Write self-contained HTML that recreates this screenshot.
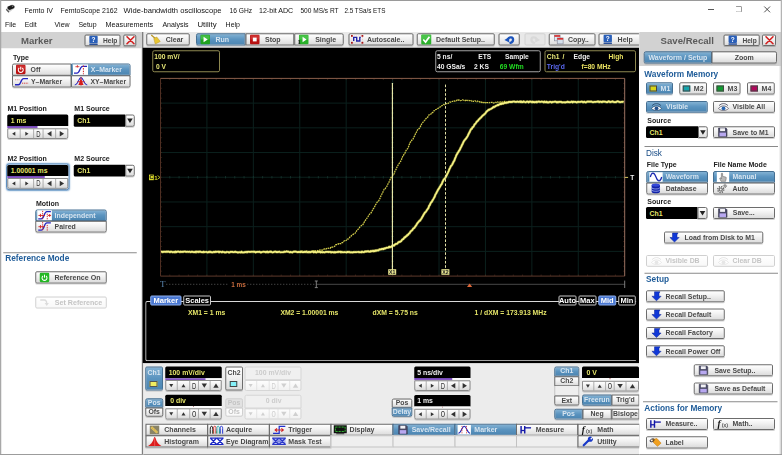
<!DOCTYPE html><html><head><meta charset="utf-8"><title>FemtoScope</title><style>
*{box-sizing:border-box;margin:0;padding:0}
html,body{width:782px;height:455px;overflow:hidden;background:#fff}
body{font-family:"Liberation Sans",sans-serif;position:relative;color:#222}
.a{position:absolute}
.t{position:absolute;white-space:nowrap;line-height:1;}
.b{font-weight:bold}
.btn{position:absolute;border:1px solid #6c6c6c;border-radius:1.6px;background:linear-gradient(#ffffff,#f1f1f1 45%,#dcdcdc);box-shadow:0 1px 0 rgba(0,0,0,.18)}
.sel{background:linear-gradient(#82b1d3,#5a93bf 50%,#4c86b2);border-color:#456f92}
.dis{border-color:#d0d0d0;background:linear-gradient(#ffffff,#f8f8f8);box-shadow:none}
.lbl{position:absolute;white-space:nowrap;line-height:1;font-weight:bold;font-size:6.9px;color:#484848}
.sel .lbl{color:#d8e5f0}
.dis .lbl{color:#c4c4c4}
.fld{position:absolute;background:#000}
.hd{position:absolute;white-space:nowrap;line-height:1;font-weight:bold;color:#1f5c99}
svg{position:absolute;overflow:visible}
</style></head><body><div style="position:absolute;left:0;top:0;width:3128px;height:1820px;transform:scale(.25);transform-origin:0 0"><div style="zoom:4;position:absolute;left:0;top:0;width:782px;height:455px;overflow:hidden">
<div class="a" style="left:0px;top:0px;width:782px;height:1px;background:#9a9a9a;"></div>
<svg style="left:5.6px;top:4.6px" width="9.4" height="8.6" viewBox="0 0 9.4 8.6"><path d="M.3 5.2 L2 2.2 L6.6 .3 L9 1.4 L8.8 4 L3.2 8.3 Z" fill="#d0d0d0"/><path d="M2 2.2 L6.6 .3 L9 1.4 L8.8 3.6 L4.2 5.4 L2.2 4.4 Z" fill="#1a1a1a"/><path d="M.3 5.2 L3.2 8.3 L3.6 6.8 L1.2 4.4Z" fill="#555"/><path d="M6.2 1.3 L7.6 1.9" stroke="#e0e0e0" stroke-width=".7"/></svg>
<svg style="left:0;top:0" width="782" height="455"><text x="24.6" y="12.66" font-size="7.4" fill="#111"  textLength="28.40" lengthAdjust="spacingAndGlyphs" font-family="Liberation Sans,sans-serif">Femto IV</text></svg>
<svg style="left:0;top:0" width="782" height="455"><text x="60.6" y="12.66" font-size="7.4" fill="#111"  textLength="57.00" lengthAdjust="spacingAndGlyphs" font-family="Liberation Sans,sans-serif">FemtoScope 2162</text></svg>
<svg style="left:0;top:0" width="782" height="455"><text x="123.6" y="12.66" font-size="7.4" fill="#111"  textLength="98.00" lengthAdjust="spacingAndGlyphs" font-family="Liberation Sans,sans-serif">Wide-bandwidth oscilloscope</text></svg>
<svg style="left:0;top:0" width="782" height="455"><text x="229.6" y="12.66" font-size="7.4" fill="#111"  textLength="22.60" lengthAdjust="spacingAndGlyphs" font-family="Liberation Sans,sans-serif">16 GHz</text></svg>
<svg style="left:0;top:0" width="782" height="455"><text x="259" y="12.66" font-size="7.4" fill="#111"  textLength="34.20" lengthAdjust="spacingAndGlyphs" font-family="Liberation Sans,sans-serif">12-bit ADC</text></svg>
<svg style="left:0;top:0" width="782" height="455"><text x="300.4" y="12.66" font-size="7.4" fill="#111"  textLength="38.20" lengthAdjust="spacingAndGlyphs" font-family="Liberation Sans,sans-serif">500 MS/s RT</text></svg>
<svg style="left:0;top:0" width="782" height="455"><text x="344.4" y="12.66" font-size="7.4" fill="#111"  textLength="41.00" lengthAdjust="spacingAndGlyphs" font-family="Liberation Sans,sans-serif">2.5 TSa/s ETS</text></svg>
<div class="a" style="left:708px;top:8.9px;width:6px;height:0.9px;background:#222;"></div>
<div class="a" style="left:735.6px;top:6.2px;width:6.2px;height:6px;border:0.8px solid #555;border-top-color:#111;border-right-color:#111;border-radius:.8px"></div>
<svg style="left:764.3px;top:6.4px" width="5.8" height="5.8" viewBox="0 0 7 7"><path d="M0 0 L7 7 M7 0 L0 7" stroke="#222" stroke-width=".95"/></svg>
<svg style="left:0;top:0" width="782" height="455"><text x="5" y="27.44" font-size="7.6" fill="#111"  textLength="11.20" lengthAdjust="spacingAndGlyphs" font-family="Liberation Sans,sans-serif">File</text></svg>
<svg style="left:0;top:0" width="782" height="455"><text x="24.8" y="27.44" font-size="7.6" fill="#111"  textLength="11.80" lengthAdjust="spacingAndGlyphs" font-family="Liberation Sans,sans-serif">Edit</text></svg>
<svg style="left:0;top:0" width="782" height="455"><text x="54.6" y="27.44" font-size="7.6" fill="#111"  textLength="15.00" lengthAdjust="spacingAndGlyphs" font-family="Liberation Sans,sans-serif">View</text></svg>
<svg style="left:0;top:0" width="782" height="455"><text x="78.4" y="27.44" font-size="7.6" fill="#111"  textLength="18.20" lengthAdjust="spacingAndGlyphs" font-family="Liberation Sans,sans-serif">Setup</text></svg>
<svg style="left:0;top:0" width="782" height="455"><text x="105.5" y="27.44" font-size="7.6" fill="#111"  textLength="47.70" lengthAdjust="spacingAndGlyphs" font-family="Liberation Sans,sans-serif">Measurements</text></svg>
<svg style="left:0;top:0" width="782" height="455"><text x="162.4" y="27.44" font-size="7.6" fill="#111"  textLength="26.20" lengthAdjust="spacingAndGlyphs" font-family="Liberation Sans,sans-serif">Analysis</text></svg>
<svg style="left:0;top:0" width="782" height="455"><text x="197.4" y="27.44" font-size="7.6" fill="#111"  textLength="19.20" lengthAdjust="spacingAndGlyphs" font-family="Liberation Sans,sans-serif">Utility</text></svg>
<svg style="left:0;top:0" width="782" height="455"><text x="225.6" y="27.44" font-size="7.6" fill="#111"  textLength="14.40" lengthAdjust="spacingAndGlyphs" font-family="Liberation Sans,sans-serif">Help</text></svg>
<div class="a" style="left:0px;top:32px;width:142px;height:423px;background:#fff;"></div>
<div class="a" style="left:0px;top:32px;width:142px;height:16.3px;background:#d2d2d2;"></div>
<div class="a" style="left:0px;top:0px;width:1.3px;height:455px;background:#a8a8a8;"></div>
<div class="a" style="left:141px;top:48px;width:1.5px;height:407px;background:#e6e6e6;"></div>
<div class="t b" style="left:21px;top:36.20px;font-size:9.6px;color:#5a5a5a;">Marker</div>
<div class="btn" style="left:84.4px;top:34.4px;width:36px;height:11.8px;"><svg style="left:3.5999999999999996px;top:0.25px" width="9" height="9.3" viewBox="0 0 9 10"><rect x="0" y="0" width="9" height="8" rx="1" fill="#2a5fb8"/><rect x="0" y="8.4" width="9" height="1.6" fill="#2a4f98"/><text x="4.5" y="6.6" font-size="7" font-weight="bold" fill="#fff" text-anchor="middle" font-family="Liberation Sans,sans-serif">?</text></svg><div class="lbl" style="left:17.6px;top:1.60px;font-size:6.6px;">Help</div></div>
<div class="btn" style="left:123.3px;top:34.4px;width:13px;height:11.8px;"><svg style="left:1.6px;top:0.4px" width="9" height="9" viewBox="0 0 9 9"><path d="M1 1 L8 8 M8 1 L1 8" stroke="#d42020" stroke-width="1.6" stroke-linecap="round"/></svg></div>
<div class="t b" style="left:13px;top:54.30px;font-size:7px;color:#222;">Type</div>
<div class="btn" style="left:12px;top:63.5px;width:59.5px;height:12.2px;border-radius:2px 0 0 0"><svg style="left:3px;top:0.35px" width="9.5" height="9.5" viewBox="0 0 10 10"><rect width="10" height="10" rx="1.2" fill="#bc1212"/><rect x=".6" y=".6" width="8.8" height="4" rx="1" fill="#e05050" opacity=".45"/><path d="M3.4 3.4 A2.6 2.6 0 1 0 6.6 3.4" fill="none" stroke="#fff" stroke-width="1.1"/><path d="M5 2 V5.2" stroke="#fff" stroke-width="1.1"/></svg><div class="lbl" style="left:17.6px;top:1.65px;font-size:6.9px;">Off</div></div>
<div class="btn sel" style="left:71px;top:63.5px;width:59.5px;height:12.2px;border-radius:0 2px 0 0"><svg style="left:1px;top:-0.1px" width="15" height="10.4" viewBox="0 0 15 10.4"><rect width="15" height="10.4" fill="#fff"/><path d="M1 8.6 H4 C7 8.6 6.6 1.8 9.6 1.8 H14" fill="none" stroke="#2424c0" stroke-width="1.3"/><path d="M10.4 1 V9.8" stroke="#d02020" stroke-width="1" stroke-dasharray="1.5 1.1"/><path d="M2.4 2.2 H6.4 M4.4 .6 V3" stroke="#d02020" stroke-width=".8"/></svg><div class="lbl" style="left:18.8px;top:1.65px;font-size:6.9px;">X–Marker</div></div>
<div class="btn" style="left:12px;top:75.3px;width:59.5px;height:12.2px;border-radius:0 0 0 2px"><svg style="left:1.6px;top:0.6px" width="14" height="9" viewBox="0 0 14 9"><path d="M.5 7.8 H4 C6.6 7.8 6.2 1.6 9 1.6 H13.5" fill="none" stroke="#2424c0" stroke-width="1.4"/><path d="M.5 2.8 H6" stroke="#e08080" stroke-width=".9" stroke-dasharray="1 .8"/><path d="M7.6 6.2 H13.6" stroke="#d02020" stroke-width=".9" stroke-dasharray="1 .8"/></svg><div class="lbl" style="left:18px;top:1.65px;font-size:6.9px;">Y–Marker</div></div>
<div class="btn" style="left:71px;top:75.3px;width:59.5px;height:12.2px;border-radius:0 0 2px 0"><svg style="left:2px;top:0.3px" width="14" height="9.6" viewBox="0 0 14 10"><path d="M.5 8.8 C4 8.8 4.4 1.2 7 1.2 C9.6 1.2 10 8.8 13.5 8.8" fill="none" stroke="#2424c0" stroke-width="1.1"/><path d="M4.2 8.8 C5.6 7 5.8 2.6 7 2.6 C8.2 2.6 8.4 7 9.8 8.8 Z" fill="#d81c1c"/><path d="M3.2 5.4 H10.8 M7 .4 V9.6" stroke="#d02020" stroke-width=".8"/></svg><div class="lbl" style="left:18.4px;top:1.65px;font-size:6.9px;">XY–Marker</div></div>
<div class="t b" style="left:7.5px;top:105.10px;font-size:7px;color:#222;">M1 Position</div>
<div class="t b" style="left:74.3px;top:105.10px;font-size:7px;color:#222;">M1 Source</div>
<div class="fld" style="left:7.2px;top:114.6px;width:61px;height:11.3px;border-radius:1.5px 1.5px 0 0"></div>
<div class="t b" style="left:10.7px;top:117.00px;font-size:6.9px;color:#e6e66a;">1 ms</div>
<div class="a" style="left:7.2px;top:125.89999999999999px;width:61px;height:2.5px;background:#fbfbfb;"></div>
<div class="a" style="left:7.2px;top:125.89999999999999px;width:30.4px;height:2.3px;background:linear-gradient(#6e44b0,#9460d0);"></div>
<div class="a" style="left:7.2px;top:128.3px;width:61px;height:10.8px;border:1px solid #8c8c8c;border-radius:0 0 2px 2px;background:linear-gradient(#ffffff,#f0f0f0 45%,#dadada);box-shadow:0 1px 0 rgba(0,0,0,.18)"></div>
<svg style="left:0;top:0" width="782" height="455"><polygon points="15.30,131.80 15.30,135.80 12.10,133.80" fill="#333"/><path d="M20.19 129.10000000000002 V138.3" stroke="#9a9a9a" stroke-width=".8"/><polygon points="25.30,131.80 25.30,135.80 28.50,133.80" fill="#333"/><path d="M33.61 129.10000000000002 V138.3" stroke="#9a9a9a" stroke-width=".8"/><text x="38.34" y="136.70" font-size="8.3" fill="#333" text-anchor="middle" textLength="4.3" lengthAdjust="spacingAndGlyphs" font-family="Liberation Sans,sans-serif">D</text><path d="M43.07 129.10000000000002 V138.3" stroke="#9a9a9a" stroke-width=".8"/><polygon points="51.51,131.10 51.51,136.50 47.19,133.80" fill="#333"/><path d="M55.63 129.10000000000002 V138.3" stroke="#9a9a9a" stroke-width=".8"/><polygon points="59.76,131.10 59.76,136.50 64.08,133.80" fill="#333"/></svg>
<div class="fld" style="left:73.7px;top:114.5px;width:51.5px;height:12.2px;border-radius:1.5px 0 0 1.5px"></div>
<div class="t b" style="left:77.2px;top:117.35px;font-size:6.9px;color:#e6e66a;">Ch1</div>
<div class="btn" style="left:125.19999999999999px;top:114.5px;width:9.5px;height:12.2px;border-radius:0 2px 2px 0"></div>
<svg style="left:0;top:0" width="782" height="455"><polygon points="127.15,118.56 132.75,118.56 129.95,123.04" fill="#222"/></svg>
<div class="t b" style="left:7.5px;top:155.30px;font-size:7px;color:#222;">M2 Position</div>
<div class="t b" style="left:74.3px;top:155.30px;font-size:7px;color:#222;">M2 Source</div>
<div class="a" style="left:6px;top:163.6px;width:63.4px;height:26.6px;border:1.2px solid #5f8fc0;border-radius:3px;background:#dce8f4;box-shadow:0 0 1.5px #7aa6d0"></div>
<div class="fld" style="left:7.2px;top:164.9px;width:61px;height:11px;border-radius:1.5px 1.5px 0 0"></div>
<div class="t b" style="left:10.7px;top:167.15px;font-size:6.9px;color:#e6e66a;">1.00001 ms</div>
<div class="a" style="left:7.2px;top:175.9px;width:61px;height:2.5px;background:#fbfbfb;"></div>
<div class="a" style="left:7.2px;top:175.9px;width:37.5px;height:2.3px;background:linear-gradient(#6e44b0,#9460d0);"></div>
<div class="a" style="left:7.2px;top:178px;width:61px;height:10.8px;border:1px solid #8c8c8c;border-radius:0 0 2px 2px;background:linear-gradient(#ffffff,#f0f0f0 45%,#dadada);box-shadow:0 1px 0 rgba(0,0,0,.18)"></div>
<svg style="left:0;top:0" width="782" height="455"><polygon points="15.30,181.50 15.30,185.50 12.10,183.50" fill="#333"/><path d="M20.19 178.8 V188.0" stroke="#9a9a9a" stroke-width=".8"/><polygon points="25.30,181.50 25.30,185.50 28.50,183.50" fill="#333"/><path d="M33.61 178.8 V188.0" stroke="#9a9a9a" stroke-width=".8"/><text x="38.34" y="186.40" font-size="8.3" fill="#333" text-anchor="middle" textLength="4.3" lengthAdjust="spacingAndGlyphs" font-family="Liberation Sans,sans-serif">D</text><path d="M43.07 178.8 V188.0" stroke="#9a9a9a" stroke-width=".8"/><polygon points="51.51,180.80 51.51,186.20 47.19,183.50" fill="#333"/><path d="M55.63 178.8 V188.0" stroke="#9a9a9a" stroke-width=".8"/><polygon points="59.76,180.80 59.76,186.20 64.08,183.50" fill="#333"/></svg>
<div class="fld" style="left:73.7px;top:164.8px;width:51.5px;height:11.8px;border-radius:1.5px 0 0 1.5px"></div>
<div class="t b" style="left:77.2px;top:167.45px;font-size:6.9px;color:#e6e66a;">Ch1</div>
<div class="btn" style="left:125.19999999999999px;top:164.8px;width:9.5px;height:11.8px;border-radius:0 2px 2px 0"></div>
<svg style="left:0;top:0" width="782" height="455"><polygon points="127.15,168.66 132.75,168.66 129.95,173.14" fill="#222"/></svg>
<div class="t b" style="left:36px;top:199.70px;font-size:7px;color:#222;">Motion</div>
<div class="btn sel" style="left:35.2px;top:209.5px;width:71.6px;height:11.6px;border-radius:2px 2px 0 0"><svg style="left:1px;top:-0.2px" width="14.6" height="10" viewBox="0 0 14.6 10"><rect width="14.6" height="10" fill="#fff"/><path d="M1 8.6 H4 C7.2 8.6 6.6 1.4 9.6 1.4 H13.6" fill="none" stroke="#2424c0" stroke-width="1.3"/><path d="M5.4 .6 V9.6 M10 3.4 V9.6" stroke="#d02020" stroke-width=".9" stroke-dasharray="1.3 .9"/><path d="M1.2 5.2 H7.6 M3.2 3.6 V6.8 M10.6 5.2 H13.8 M12.4 3.8 V6.6" stroke="#d02020" stroke-width=".9"/></svg><div class="lbl" style="left:18.4px;top:1.35px;font-size:6.9px;">Independent</div></div>
<div class="btn" style="left:35.2px;top:220.8px;width:71.6px;height:11.6px;border-radius:0 0 2px 2px"><svg style="left:1px;top:-0.2px" width="14.6" height="10" viewBox="0 0 14.6 10"><path d="M1 8.6 H4 C7.2 8.6 6.6 1.4 9.6 1.4 H13.6" fill="none" stroke="#2424c0" stroke-width="1.3"/><path d="M5.4 .6 V9.6 M10 3.4 V9.6" stroke="#d02020" stroke-width=".9" stroke-dasharray="1.3 .9"/><path d="M1.2 5.2 H7.6 M3.2 3.6 V6.8" stroke="#d02020" stroke-width=".9"/></svg><div class="lbl" style="left:18.4px;top:1.35px;font-size:6.9px;">Paired</div></div>
<div class="a" style="left:3.3px;top:252.2px;width:133.5px;height:1px;background:#8a8a8a;"></div>
<div class="hd" style="left:5.2px;top:254.04999999999998px;font-size:8.3px">Reference Mode</div>
<div class="btn" style="left:35.2px;top:271.3px;width:71.6px;height:12.2px;"><svg style="left:3.5px;top:0.35px" width="9.5" height="9.5" viewBox="0 0 10 10"><rect width="10" height="10" rx="1.2" fill="#22b822"/><path d="M3.4 3.4 A2.6 2.6 0 1 0 6.6 3.4" fill="none" stroke="#fff" stroke-width="1.1"/><path d="M5 2 V5.2" stroke="#fff" stroke-width="1.1"/></svg><div class="lbl" style="left:18.2px;top:1.55px;font-size:7.1px;">Reference On</div></div>
<div class="btn dis" style="left:35.2px;top:296.6px;width:71.6px;height:11.8px;"><svg style="left:3px;top:0.9px" width="10" height="8" viewBox="0 0 10 8"><path d="M1 1.5 H5 C7.5 1.5 7.5 4 7.5 5.5" fill="none" stroke="#dcdcdc" stroke-width="1.3"/><path d="M5.4 4.6 L7.5 7.6 L9.6 4.6 Z" fill="#dcdcdc"/></svg><div class="lbl" style="left:18.6px;top:1.35px;font-size:7.1px;">Set Reference</div></div>
<div class="a" style="left:142.5px;top:32px;width:496.5px;height:16px;background:#e9e9e9;"></div>
<div class="a" style="left:142.2px;top:32px;width:1px;height:423px;background:#5a5a5a;"></div>
<div class="btn" style="left:146.3px;top:33.3px;width:43.5px;height:12.2px;"><svg style="left:3px;top:0.1px" width="11" height="10" viewBox="0 0 11 10"><path d="M1 0.5 L5 4" stroke="#b8962a" stroke-width="1.3"/><path d="M3.5 4 L6.5 2.5 L10 7 L5 9.5 Z" fill="#e8c532" stroke="#b89620" stroke-width=".5"/></svg><div class="lbl" style="left:18.5px;top:1.60px;font-size:7px;">Clear</div></div>
<div class="btn sel" style="left:196px;top:33.3px;width:49.6px;height:12.2px;border-radius:2px 0 0 2px"><svg style="left:3.5px;top:0.35px" width="9.5" height="9.5" viewBox="0 0 10 10"><rect width="10" height="10" rx="1" fill="#1fa21f"/><rect x=".5" y=".5" width="9" height="4.5" fill="#5cd25c" opacity=".6"/><path d="M3.2 2.2 L7.6 5 L3.2 7.8 Z" fill="#fff"/></svg><div class="lbl" style="left:18.5px;top:1.60px;font-size:7px;">Run</div></div>
<div class="btn" style="left:245.6px;top:33.3px;width:48.6px;height:12.2px;border-radius:0"><svg style="left:3.4000000000000004px;top:0.35px" width="9.5" height="9.5" viewBox="0 0 10 10"><rect width="10" height="10" rx="1" fill="#b81212"/><rect x=".5" y=".5" width="9" height="4.5" fill="#e85050" opacity=".5"/><rect x="3" y="3" width="4" height="4" fill="#fff"/></svg><div class="lbl" style="left:18.5px;top:1.60px;font-size:7px;">Stop</div></div>
<div class="btn" style="left:294.2px;top:33.3px;width:49.6px;height:12.2px;border-radius:0 2px 2px 0"><svg style="left:2.6px;top:0.35px" width="11" height="9.5" viewBox="-1 0 11 10"><rect width="10" height="10" rx="1" fill="#28b028"/><rect x=".5" y=".5" width="9" height="4.5" fill="#5cd25c" opacity=".6"/><path d="M3.8 2.2 L8 5 L3.8 7.8 Z" fill="#fff"/><text x="-1.6" y="10" font-size="7" font-weight="bold" fill="#111" font-family="Liberation Serif,serif">1</text></svg><div class="lbl" style="left:20px;top:1.60px;font-size:7px;">Single</div></div>
<div class="btn" style="left:348.4px;top:33.3px;width:65px;height:12.2px;"><svg style="left:1.6px;top:0.75px" width="12.3" height="8.7" viewBox="0 0 12.3 8.7"><path d="M.8 .8 H11.5 V7.9 H.8 Z" fill="none" stroke="#f0b0b0" stroke-width=".6" stroke-dasharray="1 1"/><path d="M2.7 6 V2.4 H5.7 V6 H8.8 V2.4 H9.8" fill="none" stroke="#2222a8" stroke-width="1.4"/><rect x="0" y="0" width="1.8" height="1.8" fill="#a81818"/><rect x="10.5" y="0" width="1.8" height="1.8" fill="#a81818"/><rect x="0" y="6.9" width="1.8" height="1.8" fill="#a81818"/><rect x="10.5" y="6.9" width="1.8" height="1.8" fill="#a81818"/></svg><div class="lbl" style="left:17.6px;top:1.60px;font-size:7px;">Autoscale..</div></div>
<div class="btn" style="left:416.7px;top:33.3px;width:78px;height:12.2px;"><svg style="left:3.5px;top:0.1px" width="10" height="10" viewBox="0 0 10 10"><rect width="10" height="10" rx="1" fill="#2cb02c"/><rect x=".5" y=".5" width="9" height="4.5" fill="#66d866" opacity=".5"/><path d="M2 5 L4.3 7.6 L8.2 2.2" fill="none" stroke="#fff" stroke-width="1.7"/></svg><div class="lbl" style="left:18.3px;top:1.60px;font-size:7px;">Default Setup..</div></div>
<div class="btn" style="left:498.6px;top:33.3px;width:21.2px;height:12.2px;"><svg style="left:4.6px;top:1.1px" width="10" height="8" viewBox="0 0 10 8"><path d="M3.8 3.6 C5 1.2 9 1.4 8.8 4.4 C8.7 6 7.6 7 6.2 7.3" fill="none" stroke="#1c54bc" stroke-width="2.3" stroke-linecap="round"/><path d="M.2 4.6 L4.9 1.6 L5 6.9 Z" fill="#1c54bc"/></svg></div>
<div class="btn dis" style="left:524.6px;top:33.3px;width:21px;height:12.2px;background:#e6e6e6;border-color:#d2d2d2"><svg style="left:4.6px;top:1.1px" width="10" height="8" viewBox="0 0 10 8"><g transform="translate(10,0) scale(-1,1)"><path d="M3.8 3.6 C5 1.2 9 1.4 8.8 4.4 C8.7 6 7.6 7 6.2 7.3" fill="none" stroke="#d9d9d9" stroke-width="2.3" stroke-linecap="round"/><path d="M.2 4.6 L4.9 1.6 L5 6.9 Z" fill="#d9d9d9"/></g></svg></div>
<div class="btn" style="left:548.7px;top:33.3px;width:46.7px;height:12.2px;"><svg style="left:4px;top:0.35px" width="10" height="9.5" viewBox="0 0 10 10"><rect x=".4" y=".4" width="6" height="6" fill="#e4ecf4" stroke="#889" stroke-width=".7"/><rect x=".4" y=".4" width="6" height="1.8" fill="#d83030"/><rect x="3.4" y="3.4" width="6.2" height="6.2" fill="#d4e0ec" stroke="#889" stroke-width=".7"/><rect x="3.4" y="3.4" width="6.2" height="1.8" fill="#d83030"/></svg><div class="lbl" style="left:18.2px;top:1.60px;font-size:7px;">Copy..</div></div>
<div class="btn" style="left:598.6px;top:33.3px;width:42px;height:12.2px;"><svg style="left:3.5999999999999996px;top:0.45px" width="9" height="9.3" viewBox="0 0 9 10"><rect x="0" y="0" width="9" height="8" rx="1" fill="#2a5fb8"/><rect x="0" y="8.4" width="9" height="1.6" fill="#2a4f98"/><text x="4.5" y="6.6" font-size="7" font-weight="bold" fill="#fff" text-anchor="middle" font-family="Liberation Sans,sans-serif">?</text></svg><div class="lbl" style="left:18px;top:1.60px;font-size:7px;">Help</div></div>
<div class="a" style="left:142.8px;top:47.8px;width:496.2px;height:315.3px;background:#000;"></div>
<div class="a" style="left:152.3px;top:50.2px;width:67.6px;height:22px;border:1px solid #8e8850;border-radius:2px"></div>
<div class="t b" style="left:154.3px;top:53.25px;font-size:6.7px;color:#e8e878;">100 mV/</div>
<div class="t b" style="left:156px;top:63.05px;font-size:6.7px;color:#e8e878;">0 V</div>
<div class="a" style="left:435.3px;top:50.2px;width:105.5px;height:22px;border:1px solid #a2a2a2;border-radius:2px"></div>
<div class="t b" style="left:437px;top:53.25px;font-size:6.7px;color:#f0f0f0;">5 ns/</div>
<div class="t b" style="left:478.2px;top:53.25px;font-size:6.7px;color:#f0f0f0;">ETS</div>
<div class="t b" style="left:505px;top:53.25px;font-size:6.7px;color:#f0f0f0;">Sample</div>
<div class="t b" style="left:437px;top:63.35px;font-size:6.7px;color:#f0f0f0;">40 GSa/s</div>
<div class="t b" style="left:474px;top:63.35px;font-size:6.7px;color:#f0f0f0;">2 KS</div>
<div class="t b" style="left:499.8px;top:63.35px;font-size:6.7px;color:#22dd22;">69 Wfm</div>
<div class="a" style="left:544.5px;top:50.2px;width:91.5px;height:22px;border:1px solid #8e8850;border-radius:2px"></div>
<svg style="left:0;top:0" width="782" height="455"><path d="M206.92 78.4 V276.1" stroke="#0b201d" stroke-width="1"/><path d="M253.34 78.4 V276.1" stroke="#0b201d" stroke-width="1"/><path d="M299.76 78.4 V276.1" stroke="#0b201d" stroke-width="1"/><path d="M346.18 78.4 V276.1" stroke="#0b201d" stroke-width="1"/><path d="M392.60 78.4 V276.1" stroke="#0b201d" stroke-width="1"/><path d="M439.02 78.4 V276.1" stroke="#0b201d" stroke-width="1"/><path d="M485.44 78.4 V276.1" stroke="#0b201d" stroke-width="1"/><path d="M531.86 78.4 V276.1" stroke="#0b201d" stroke-width="1"/><path d="M578.28 78.4 V276.1" stroke="#0b201d" stroke-width="1"/><path d="M160.5 103.11 H624.7" stroke="#0b201d" stroke-width="1"/><path d="M160.5 127.83 H624.7" stroke="#0b201d" stroke-width="1"/><path d="M160.5 152.54 H624.7" stroke="#0b201d" stroke-width="1"/><path d="M160.5 177.25 H624.7" stroke="#0b201d" stroke-width="1"/><path d="M160.5 201.96 H624.7" stroke="#0b201d" stroke-width="1"/><path d="M160.5 226.68 H624.7" stroke="#0b201d" stroke-width="1"/><path d="M160.5 251.39 H624.7" stroke="#0b201d" stroke-width="1"/><path d="M169.78 176.05 v2.4 M179.07 176.05 v2.4 M188.35 176.05 v2.4 M197.64 176.05 v2.4 M206.92 176.05 v2.4 M216.20 176.05 v2.4 M225.49 176.05 v2.4 M234.77 176.05 v2.4 M244.06 176.05 v2.4 M253.34 176.05 v2.4 M262.62 176.05 v2.4 M271.91 176.05 v2.4 M281.19 176.05 v2.4 M290.48 176.05 v2.4 M299.76 176.05 v2.4 M309.04 176.05 v2.4 M318.33 176.05 v2.4 M327.61 176.05 v2.4 M336.90 176.05 v2.4 M346.18 176.05 v2.4 M355.46 176.05 v2.4 M364.75 176.05 v2.4 M374.03 176.05 v2.4 M383.32 176.05 v2.4 M392.60 176.05 v2.4 M401.88 176.05 v2.4 M411.17 176.05 v2.4 M420.45 176.05 v2.4 M429.74 176.05 v2.4 M439.02 176.05 v2.4 M448.30 176.05 v2.4 M457.59 176.05 v2.4 M466.87 176.05 v2.4 M476.16 176.05 v2.4 M485.44 176.05 v2.4 M494.72 176.05 v2.4 M504.01 176.05 v2.4 M513.29 176.05 v2.4 M522.58 176.05 v2.4 M531.86 176.05 v2.4 M541.14 176.05 v2.4 M550.43 176.05 v2.4 M559.71 176.05 v2.4 M569.00 176.05 v2.4 M578.28 176.05 v2.4 M587.56 176.05 v2.4 M596.85 176.05 v2.4 M606.13 176.05 v2.4 M615.42 176.05 v2.4 M391.40 83.34 h2.4 M391.40 88.29 h2.4 M391.40 93.23 h2.4 M391.40 98.17 h2.4 M391.40 103.11 h2.4 M391.40 108.06 h2.4 M391.40 113.00 h2.4 M391.40 117.94 h2.4 M391.40 122.88 h2.4 M391.40 127.83 h2.4 M391.40 132.77 h2.4 M391.40 137.71 h2.4 M391.40 142.65 h2.4 M391.40 147.60 h2.4 M391.40 152.54 h2.4 M391.40 157.48 h2.4 M391.40 162.42 h2.4 M391.40 167.37 h2.4 M391.40 172.31 h2.4 M391.40 177.25 h2.4 M391.40 182.19 h2.4 M391.40 187.14 h2.4 M391.40 192.08 h2.4 M391.40 197.02 h2.4 M391.40 201.96 h2.4 M391.40 206.91 h2.4 M391.40 211.85 h2.4 M391.40 216.79 h2.4 M391.40 221.73 h2.4 M391.40 226.68 h2.4 M391.40 231.62 h2.4 M391.40 236.56 h2.4 M391.40 241.50 h2.4 M391.40 246.45 h2.4 M391.40 251.39 h2.4 M391.40 256.33 h2.4 M391.40 261.27 h2.4 M391.40 266.22 h2.4 M391.40 271.16 h2.4 " stroke="#183630" stroke-width=".8"/><path d="M169.78 78.4 v1.6 M169.78 276.1 v-1.6 M179.07 78.4 v1.6 M179.07 276.1 v-1.6 M188.35 78.4 v1.6 M188.35 276.1 v-1.6 M197.64 78.4 v1.6 M197.64 276.1 v-1.6 M206.92 78.4 v1.6 M206.92 276.1 v-1.6 M216.20 78.4 v1.6 M216.20 276.1 v-1.6 M225.49 78.4 v1.6 M225.49 276.1 v-1.6 M234.77 78.4 v1.6 M234.77 276.1 v-1.6 M244.06 78.4 v1.6 M244.06 276.1 v-1.6 M253.34 78.4 v1.6 M253.34 276.1 v-1.6 M262.62 78.4 v1.6 M262.62 276.1 v-1.6 M271.91 78.4 v1.6 M271.91 276.1 v-1.6 M281.19 78.4 v1.6 M281.19 276.1 v-1.6 M290.48 78.4 v1.6 M290.48 276.1 v-1.6 M299.76 78.4 v1.6 M299.76 276.1 v-1.6 M309.04 78.4 v1.6 M309.04 276.1 v-1.6 M318.33 78.4 v1.6 M318.33 276.1 v-1.6 M327.61 78.4 v1.6 M327.61 276.1 v-1.6 M336.90 78.4 v1.6 M336.90 276.1 v-1.6 M346.18 78.4 v1.6 M346.18 276.1 v-1.6 M355.46 78.4 v1.6 M355.46 276.1 v-1.6 M364.75 78.4 v1.6 M364.75 276.1 v-1.6 M374.03 78.4 v1.6 M374.03 276.1 v-1.6 M383.32 78.4 v1.6 M383.32 276.1 v-1.6 M392.60 78.4 v1.6 M392.60 276.1 v-1.6 M401.88 78.4 v1.6 M401.88 276.1 v-1.6 M411.17 78.4 v1.6 M411.17 276.1 v-1.6 M420.45 78.4 v1.6 M420.45 276.1 v-1.6 M429.74 78.4 v1.6 M429.74 276.1 v-1.6 M439.02 78.4 v1.6 M439.02 276.1 v-1.6 M448.30 78.4 v1.6 M448.30 276.1 v-1.6 M457.59 78.4 v1.6 M457.59 276.1 v-1.6 M466.87 78.4 v1.6 M466.87 276.1 v-1.6 M476.16 78.4 v1.6 M476.16 276.1 v-1.6 M485.44 78.4 v1.6 M485.44 276.1 v-1.6 M494.72 78.4 v1.6 M494.72 276.1 v-1.6 M504.01 78.4 v1.6 M504.01 276.1 v-1.6 M513.29 78.4 v1.6 M513.29 276.1 v-1.6 M522.58 78.4 v1.6 M522.58 276.1 v-1.6 M531.86 78.4 v1.6 M531.86 276.1 v-1.6 M541.14 78.4 v1.6 M541.14 276.1 v-1.6 M550.43 78.4 v1.6 M550.43 276.1 v-1.6 M559.71 78.4 v1.6 M559.71 276.1 v-1.6 M569.00 78.4 v1.6 M569.00 276.1 v-1.6 M578.28 78.4 v1.6 M578.28 276.1 v-1.6 M587.56 78.4 v1.6 M587.56 276.1 v-1.6 M596.85 78.4 v1.6 M596.85 276.1 v-1.6 M606.13 78.4 v1.6 M606.13 276.1 v-1.6 M615.42 78.4 v1.6 M615.42 276.1 v-1.6 M160.5 83.34 h1.6 M624.7 83.34 h-1.6 M160.5 88.29 h1.6 M624.7 88.29 h-1.6 M160.5 93.23 h1.6 M624.7 93.23 h-1.6 M160.5 98.17 h1.6 M624.7 98.17 h-1.6 M160.5 103.11 h1.6 M624.7 103.11 h-1.6 M160.5 108.06 h1.6 M624.7 108.06 h-1.6 M160.5 113.00 h1.6 M624.7 113.00 h-1.6 M160.5 117.94 h1.6 M624.7 117.94 h-1.6 M160.5 122.88 h1.6 M624.7 122.88 h-1.6 M160.5 127.83 h1.6 M624.7 127.83 h-1.6 M160.5 132.77 h1.6 M624.7 132.77 h-1.6 M160.5 137.71 h1.6 M624.7 137.71 h-1.6 M160.5 142.65 h1.6 M624.7 142.65 h-1.6 M160.5 147.60 h1.6 M624.7 147.60 h-1.6 M160.5 152.54 h1.6 M624.7 152.54 h-1.6 M160.5 157.48 h1.6 M624.7 157.48 h-1.6 M160.5 162.42 h1.6 M624.7 162.42 h-1.6 M160.5 167.37 h1.6 M624.7 167.37 h-1.6 M160.5 172.31 h1.6 M624.7 172.31 h-1.6 M160.5 177.25 h1.6 M624.7 177.25 h-1.6 M160.5 182.19 h1.6 M624.7 182.19 h-1.6 M160.5 187.14 h1.6 M624.7 187.14 h-1.6 M160.5 192.08 h1.6 M624.7 192.08 h-1.6 M160.5 197.02 h1.6 M624.7 197.02 h-1.6 M160.5 201.96 h1.6 M624.7 201.96 h-1.6 M160.5 206.91 h1.6 M624.7 206.91 h-1.6 M160.5 211.85 h1.6 M624.7 211.85 h-1.6 M160.5 216.79 h1.6 M624.7 216.79 h-1.6 M160.5 221.73 h1.6 M624.7 221.73 h-1.6 M160.5 226.68 h1.6 M624.7 226.68 h-1.6 M160.5 231.62 h1.6 M624.7 231.62 h-1.6 M160.5 236.56 h1.6 M624.7 236.56 h-1.6 M160.5 241.50 h1.6 M624.7 241.50 h-1.6 M160.5 246.45 h1.6 M624.7 246.45 h-1.6 M160.5 251.39 h1.6 M624.7 251.39 h-1.6 M160.5 256.33 h1.6 M624.7 256.33 h-1.6 M160.5 261.27 h1.6 M624.7 261.27 h-1.6 M160.5 266.22 h1.6 M624.7 266.22 h-1.6 M160.5 271.16 h1.6 M624.7 271.16 h-1.6 " stroke="#4a2c20" stroke-width=".6"/><path d="M160.5 276.1 V78.4" fill="none" stroke="#4e2e22" stroke-width="1"/><path d="M160.5 78.4 H624.7" fill="none" stroke="#8a5e4a" stroke-width="1"/><path d="M160.5 276.1 H624.7" fill="none" stroke="#5e3a2c" stroke-width="1"/><path d="M624.7 276.1 V78.4" fill="none" stroke="#9a7260" stroke-width="1"/><path d="M296.9 251.9 L297.8 251.7 L298.7 252.3 L299.6 252.2 L300.5 252.3 L301.4 251.5 L302.3 251.2 L303.2 251.2 L304.1 251.6 L305.0 251.8 L305.9 251.5 L306.8 251.2 L307.7 251.4 L308.6 251.6 L309.5 251.6 L310.4 251.7 L311.3 251.7 L312.2 251.5 L313.1 250.8 L314.0 251.5 L314.9 250.8 L315.8 250.9 L316.7 250.6 L317.6 250.8 L318.5 250.1 L319.4 250.0 L320.3 249.9 L321.2 249.7 L322.1 250.3 L323.0 249.7 L323.9 249.2 L324.8 249.0 L325.7 249.3 L326.6 248.5 L327.5 248.0 L328.4 248.4 L329.3 248.0 L330.2 248.2 L331.1 246.9 L332.0 247.0 L332.9 247.0 L333.8 246.6 L334.7 246.3 L335.6 244.9 L336.5 244.7 L337.4 244.1 L338.3 243.8 L339.2 244.3 L340.1 243.6 L341.0 243.6 L341.9 242.5 L342.8 242.5 L343.7 241.4 L344.6 240.6 L345.5 240.6 L346.4 240.3 L347.3 239.0 L348.2 239.0 L349.1 238.3 L350.0 237.0 L350.9 236.3 L351.8 235.3 L352.7 234.6 L353.6 234.1 L354.5 233.7 L355.4 232.9 L356.3 231.3 L357.2 230.0 L358.1 229.2 L359.0 228.5 L359.9 226.9 L360.8 226.1 L361.7 225.3 L362.6 225.0 L363.5 223.6 L364.4 221.8 L365.3 220.4 L366.2 219.3 L367.1 218.0 L368.0 216.7 L368.9 214.9 L369.8 213.9 L370.7 213.5 L371.6 211.9 L372.5 210.3 L373.4 208.6 L374.3 207.6 L375.2 205.2 L376.1 204.0 L377.0 202.4 L377.9 201.4 L378.8 200.6 L379.7 199.1 L380.6 196.7 L381.5 194.7 L382.4 193.4 L383.3 191.1 L384.2 189.3 L385.1 188.9 L386.0 187.3 L386.9 186.3 L387.8 184.2 L388.7 182.9 L389.6 180.6 L390.5 178.6 L391.4 176.9 L392.3 176.2 L393.2 175.1 L394.1 173.8 L395.0 171.0 L395.9 169.6 L396.8 167.5 L397.7 165.9 L398.6 164.0 L399.5 163.0 L400.4 161.7 L401.3 160.3 L402.2 157.4 L403.1 155.9 L404.0 154.4 L404.9 153.1 L405.8 151.0 L406.7 149.5 L407.6 148.6 L408.5 146.8 L409.4 144.3 L410.3 142.1 L411.2 141.5 L412.1 139.7 L413.0 139.0 L413.9 137.1 L414.8 135.6 L415.7 133.1 L416.6 132.0 L417.5 129.9 L418.4 128.9 L419.3 128.4 L420.2 127.1 L421.1 125.0 L422.0 123.5 L422.9 122.3 L423.8 121.3 L424.7 120.3 L425.6 119.1 L426.5 118.1 L427.4 117.5 L428.3 116.5 L429.2 114.6 L430.1 114.4 L431.0 114.0 L431.9 112.5 L432.8 112.5 L433.7 110.9 L434.6 110.6 L435.5 109.8 L436.4 109.3 L437.3 108.6 L438.2 108.2 L439.1 107.8 L440.0 107.0 L440.9 106.7 L441.8 105.8 L442.7 105.3 L443.6 104.4 L444.5 104.7 L445.4 104.2 L446.3 103.6 L447.2 103.7 L448.1 103.4 L449.0 102.6 L449.9 102.0 L450.8 102.1 L451.7 101.5 L452.6 101.4 L453.5 101.5 L454.4 100.9 L455.3 101.0 L456.2 100.8 L457.1 100.1 L458.0 100.6 L458.9 99.9 L459.8 100.6 L460.7 100.6 L461.6 100.3 L462.5 99.7 L463.4 100.2 L464.3 100.0 L465.2 100.6 L466.1 99.7 L467.0 100.4 L467.9 100.7 L468.8 100.5 L469.7 100.7 L470.6 100.1 L471.5 101.1 L472.4 100.7 L473.3 101.4 L474.2 101.4 L475.1 100.7 L476.0 101.5 L476.9 101.7 L477.8 100.9 L478.7 101.3 L479.6 101.9 L480.5 101.4 L481.4 102.4 L482.3 101.9 L483.2 102.7 L484.1 102.1 L485.0 102.6 L485.9 103.2 L486.8 102.6 L487.7 102.6 L488.6 102.8 L489.5 102.6 L490.4 102.3 L491.3 102.4 L492.2 102.3 L493.1 103.1 L494.0 102.8 L494.9 103.0 L495.8 102.2 L496.7 102.8 L497.6 102.0 L498.5 102.4 L499.4 102.4 L500.3 102.0 L501.2 102.5 L502.1 102.0 L503.0 101.9 L503.9 102.2 L504.8 101.3 L505.7 102.3 L506.6 101.9 L507.5 101.6 L508.4 102.1 L509.3 101.5 L510.2 102.3 L511.1 101.8 L512.0 101.6" fill="none" stroke="#d2cc4a" stroke-width="1.25" stroke-dasharray="1.7 0.7"/><path d="M161.0 251.8 L161.7 251.7 L162.4 252.1 L163.1 251.6 L163.8 252.0 L164.5 251.8 L165.2 251.6 L165.9 252.0 L166.6 251.5 L167.3 251.9 L168.0 251.5 L168.7 251.6 L169.4 251.9 L170.1 252.2 L170.8 251.6 L171.5 251.7 L172.2 252.0 L172.9 252.3 L173.6 252.0 L174.3 251.8 L175.0 252.3 L175.7 251.5 L176.4 252.2 L177.1 251.7 L177.8 251.6 L178.5 251.5 L179.2 251.7 L179.9 252.1 L180.6 251.6 L181.3 251.9 L182.0 252.0 L182.7 251.7 L183.4 251.9 L184.1 251.5 L184.8 251.5 L185.5 251.6 L186.2 252.0 L186.9 251.8 L187.6 251.7 L188.3 251.9 L189.0 251.8 L189.7 251.7 L190.4 252.1 L191.1 252.0 L191.8 251.6 L192.5 251.9 L193.2 251.9 L193.9 252.2 L194.6 252.1 L195.3 251.7 L196.0 252.3 L196.7 251.5 L197.4 251.8 L198.1 252.1 L198.8 251.6 L199.5 251.9 L200.2 251.5 L200.9 252.0 L201.6 252.1 L202.3 252.0 L203.0 252.3 L203.7 251.7 L204.4 252.1 L205.1 252.0 L205.8 252.0 L206.5 251.9 L207.2 252.3 L207.9 252.4 L208.6 251.9 L209.3 252.1 L210.0 251.6 L210.7 252.2 L211.4 252.1 L212.1 252.4 L212.8 252.3 L213.5 251.8 L214.2 251.9 L214.9 252.2 L215.6 251.6 L216.3 252.0 L217.0 251.7 L217.7 251.7 L218.4 251.6 L219.1 252.3 L219.8 251.7 L220.5 251.8 L221.2 252.0 L221.9 252.4 L222.6 251.7 L223.3 252.0 L224.0 252.1 L224.7 252.4 L225.4 252.4 L226.1 252.4 L226.8 251.9 L227.5 252.0 L228.2 252.0 L228.9 252.5 L229.6 252.5 L230.3 251.8 L231.0 251.8 L231.7 251.9 L232.4 251.9 L233.1 252.1 L233.8 252.2 L234.5 251.9 L235.2 251.7 L235.9 252.1 L236.6 252.0 L237.3 252.2 L238.0 252.6 L238.7 252.3 L239.4 252.2 L240.1 252.3 L240.8 252.3 L241.5 251.7 L242.2 252.5 L242.9 252.4 L243.6 252.5 L244.3 252.4 L245.0 252.0 L245.7 252.1 L246.4 251.8 L247.1 252.3 L247.8 251.7 L248.5 251.7 L249.2 251.9 L249.9 251.8 L250.6 252.0 L251.3 251.7 L252.0 251.7 L252.7 251.8 L253.4 251.7 L254.1 252.0 L254.8 251.7 L255.5 252.4 L256.2 252.2 L256.9 251.8 L257.6 251.9 L258.3 251.9 L259.0 251.9 L259.7 251.7 L260.4 252.4 L261.1 252.5 L261.8 252.0 L262.5 252.0 L263.2 251.7 L263.9 251.7 L264.6 251.9 L265.3 251.8 L266.0 252.3 L266.7 251.7 L267.4 251.6 L268.1 252.4 L268.8 252.0 L269.5 251.7 L270.2 252.0 L270.9 251.5 L271.6 252.0 L272.3 252.4 L273.0 252.3 L273.7 252.1 L274.4 251.7 L275.1 251.8 L275.8 251.6 L276.5 252.2 L277.2 251.9 L277.9 252.2 L278.6 251.8 L279.3 251.7 L280.0 252.2 L280.7 252.3 L281.4 252.2 L282.1 252.2 L282.8 252.2 L283.5 252.1 L284.2 251.6 L284.9 251.9 L285.6 251.7 L286.3 251.4 L287.0 251.4 L287.7 251.7 L288.4 251.6 L289.1 252.0 L289.8 252.3 L290.5 251.8 L291.2 252.2 L291.9 252.3 L292.6 252.3 L293.3 251.7 L294.0 251.6 L294.7 251.6 L295.4 251.6 L296.1 251.6 L296.8 252.0 L297.5 252.2 L298.2 252.2 L298.9 251.8 L299.6 252.0 L300.3 252.1 L301.0 251.5 L301.7 252.0 L302.4 252.2 L303.1 252.1 L303.8 252.1 L304.5 251.9 L305.2 251.6 L305.9 252.1 L306.6 251.7 L307.3 252.2 L308.0 252.3 L308.7 251.8 L309.4 251.8 L310.1 252.3 L310.8 252.1 L311.5 251.6 L312.2 251.6 L312.9 251.6 L313.6 252.3 L314.3 252.2 L315.0 251.6 L315.7 252.3 L316.4 252.4 L317.1 252.1 L317.8 251.8 L318.5 252.0 L319.2 251.7 L319.9 251.6 L320.6 252.4 L321.3 252.1 L322.0 252.0 L322.7 252.4 L323.4 252.0 L324.1 252.4 L324.8 252.3 L325.5 251.8 L326.2 251.8 L326.9 251.9 L327.6 251.8 L328.3 252.1 L329.0 251.9 L329.7 252.0 L330.4 251.8 L331.1 252.5 L331.8 252.0 L332.5 252.1 L333.2 252.2 L333.9 252.5 L334.6 252.0 L335.3 252.5 L336.0 252.1 L336.7 252.2 L337.4 252.1 L338.1 251.7 L338.8 252.1 L339.5 251.8 L340.2 251.7 L340.9 252.4 L341.6 251.8 L342.3 252.1 L343.0 252.3 L343.7 252.2 L344.4 252.0 L345.1 252.2 L345.8 252.2 L346.5 252.4 L347.2 251.8 L347.9 252.2 L348.6 251.9 L349.3 251.9 L350.0 252.4 L350.7 252.2 L351.4 252.2 L352.1 252.4 L352.8 252.5 L353.5 252.0 L354.2 252.2 L354.9 252.1 L355.6 252.1 L356.3 252.2 L357.0 252.0 L357.7 252.0 L358.4 251.9 L359.1 252.3 L359.8 252.1 L360.5 252.2 L361.2 252.3 L361.9 251.6 L362.6 251.9 L363.3 252.2 L364.0 252.1 L364.7 251.5 L365.4 251.4 L366.1 251.7 L366.8 251.3 L367.5 251.4 L368.2 251.1 L368.9 251.6 L369.6 251.6 L370.3 251.6 L371.0 250.9 L371.7 251.3 L372.4 251.2 L373.1 250.7 L373.8 251.3 L374.5 251.2 L375.2 250.4 L375.9 251.0 L376.6 250.3 L377.3 250.2 L378.0 250.5 L378.7 250.2 L379.4 249.4 L380.1 249.5 L380.8 249.4 L381.5 249.1 L382.2 248.9 L382.9 248.9 L383.6 249.1 L384.3 248.3 L385.0 248.6 L385.7 248.3 L386.4 247.7 L387.1 247.7 L387.8 247.7 L388.5 247.4 L389.2 246.7 L389.9 247.3 L390.6 246.9 L391.3 246.9 L392.0 245.9 L392.7 245.8 L393.4 245.3 L394.1 245.6 L394.8 244.7 L395.5 244.1 L396.2 243.9 L396.9 243.8 L397.6 243.3 L398.3 242.3 L399.0 241.8 L399.7 242.1 L400.4 241.5 L401.1 241.2 L401.8 240.1 L402.5 239.4 L403.2 239.2 L403.9 238.2 L404.6 237.2 L405.3 237.3 L406.0 236.3 L406.7 236.0 L407.4 234.8 L408.1 234.9 L408.8 233.5 L409.5 233.4 L410.2 232.1 L410.9 231.2 L411.6 230.6 L412.3 230.1 L413.0 228.9 L413.7 228.2 L414.4 227.9 L415.1 226.7 L415.8 225.7 L416.5 224.7 L417.2 223.5 L417.9 222.6 L418.6 221.8 L419.3 220.9 L420.0 220.7 L420.7 219.5 L421.4 218.7 L422.1 217.3 L422.8 216.3 L423.5 214.8 L424.2 213.8 L424.9 212.5 L425.6 212.1 L426.3 211.1 L427.0 209.9 L427.7 209.0 L428.4 208.1 L429.1 205.9 L429.8 205.1 L430.5 203.4 L431.2 202.3 L431.9 201.7 L432.6 200.2 L433.3 199.1 L434.0 197.9 L434.7 196.7 L435.4 194.6 L436.1 193.6 L436.8 192.1 L437.5 190.8 L438.2 189.5 L438.9 188.6 L439.6 187.3 L440.3 186.2 L441.0 184.9 L441.7 184.1 L442.4 182.2 L443.1 180.8 L443.8 179.4 L444.5 178.9 L445.2 177.9 L445.9 176.8 L446.6 175.3 L447.3 173.9 L448.0 172.5 L448.7 171.0 L449.4 169.1 L450.1 167.8 L450.8 166.2 L451.5 165.6 L452.2 164.6 L452.9 163.2 L453.6 161.6 L454.3 160.7 L455.0 158.6 L455.7 157.0 L456.4 155.1 L457.1 154.0 L457.8 152.7 L458.5 151.7 L459.2 150.5 L459.9 149.6 L460.6 147.8 L461.3 146.6 L462.0 145.0 L462.7 143.8 L463.4 142.1 L464.1 140.8 L464.8 140.0 L465.5 139.1 L466.2 138.4 L466.9 137.2 L467.6 136.1 L468.3 134.6 L469.0 133.2 L469.7 132.0 L470.4 130.3 L471.1 129.1 L471.8 128.8 L472.5 127.3 L473.2 127.0 L473.9 125.9 L474.6 124.3 L475.3 123.9 L476.0 122.9 L476.7 121.8 L477.4 121.1 L478.1 120.6 L478.8 119.4 L479.5 119.0 L480.2 118.1 L480.9 117.6 L481.6 116.8 L482.3 116.0 L483.0 115.2 L483.7 114.9 L484.4 114.2 L485.1 113.7 L485.8 112.6 L486.5 111.7 L487.2 111.0 L487.9 110.5 L488.6 109.7 L489.3 109.8 L490.0 109.2 L490.7 109.0 L491.4 108.6 L492.1 108.3 L492.8 107.7 L493.5 106.8 L494.2 107.1 L494.9 106.6 L495.6 106.0 L496.3 105.7 L497.0 105.5 L497.7 104.8 L498.4 105.2 L499.1 104.5 L499.8 104.1 L500.5 103.9 L501.2 104.1 L501.9 103.4 L502.6 103.6 L503.3 103.6 L504.0 103.1 L504.7 102.9 L505.4 102.8 L506.1 102.9 L506.8 102.8 L507.5 102.5 L508.2 102.4 L508.9 101.8 L509.6 101.8 L510.3 101.8 L511.0 102.2 L511.7 101.8 L512.4 102.0 L513.1 101.5 L513.8 101.5 L514.5 101.6 L515.2 101.9 L515.9 101.9 L516.6 101.9 L517.3 101.6 L518.0 101.8 L518.7 101.8 L519.4 101.8 L520.1 101.4 L520.8 102.1 L521.5 101.5 L522.2 102.2 L522.9 102.2 L523.6 101.4 L524.3 101.8 L525.0 102.1 L525.7 102.3 L526.4 101.8 L527.1 101.6 L527.8 101.6 L528.5 102.3 L529.2 101.6 L529.9 101.9 L530.6 101.5 L531.3 101.9 L532.0 102.3 L532.7 101.6 L533.4 102.2 L534.1 101.9 L534.8 102.3 L535.5 102.1 L536.2 101.7 L536.9 102.3 L537.6 101.9 L538.3 101.5 L539.0 101.5 L539.7 101.9 L540.4 101.9 L541.1 101.8 L541.8 101.6 L542.5 101.8 L543.2 101.8 L543.9 102.3 L544.6 101.5 L545.3 102.2 L546.0 102.3 L546.7 101.7 L547.4 102.4 L548.1 102.2 L548.8 102.4 L549.5 101.8 L550.2 101.9 L550.9 101.9 L551.6 102.5 L552.3 102.1 L553.0 101.9 L553.7 102.0 L554.4 101.8 L555.1 101.6 L555.8 101.7 L556.5 102.3 L557.2 101.9 L557.9 102.4 L558.6 101.8 L559.3 101.8 L560.0 102.1 L560.7 101.8 L561.4 101.9 L562.1 102.5 L562.8 102.4 L563.5 102.3 L564.2 102.2 L564.9 102.4 L565.6 102.4 L566.3 102.1 L567.0 102.2 L567.7 101.6 L568.4 102.2 L569.1 102.0 L569.8 102.3 L570.5 102.2 L571.2 101.8 L571.9 101.6 L572.6 102.4 L573.3 101.7 L574.0 102.0 L574.7 101.9 L575.4 101.8 L576.1 102.2 L576.8 102.4 L577.5 101.8 L578.2 102.1 L578.9 101.8 L579.6 102.0 L580.3 101.9 L581.0 101.7 L581.7 101.6 L582.4 101.7 L583.1 102.3 L583.8 101.9 L584.5 101.7 L585.2 102.3 L585.9 102.4 L586.6 101.9 L587.3 101.6 L588.0 101.6 L588.7 101.5 L589.4 101.7 L590.1 101.5 L590.8 101.6 L591.5 101.6 L592.2 101.9 L592.9 102.2 L593.6 102.1 L594.3 101.8 L595.0 101.8 L595.7 101.9 L596.4 101.7 L597.1 101.7 L597.8 101.4 L598.5 101.6 L599.2 102.2 L599.9 101.5 L600.6 101.8 L601.3 101.9 L602.0 102.1 L602.7 101.5 L603.4 101.6 L604.1 101.5 L604.8 101.7 L605.5 101.7 L606.2 102.2 L606.9 102.1 L607.6 102.1 L608.3 101.3 L609.0 101.3 L609.7 101.9 L610.4 102.1 L611.1 101.7 L611.8 101.8 L612.5 101.3 L613.2 101.7 L613.9 102.1 L614.6 102.0 L615.3 102.1 L616.0 102.2 L616.7 101.5 L617.4 101.4 L618.1 101.4 L618.8 101.8 L619.5 101.9 L620.2 102.2 L620.9 102.0 L621.6 101.9 L622.3 102.0 L623.0 101.7 L623.7 101.8" fill="none" stroke="#e0dc58" stroke-width="2.7" stroke-linejoin="round" opacity=".5"/><path d="M161.0 251.8 L161.7 251.7 L162.4 252.1 L163.1 251.6 L163.8 252.0 L164.5 251.8 L165.2 251.6 L165.9 252.0 L166.6 251.5 L167.3 251.9 L168.0 251.5 L168.7 251.6 L169.4 251.9 L170.1 252.2 L170.8 251.6 L171.5 251.7 L172.2 252.0 L172.9 252.3 L173.6 252.0 L174.3 251.8 L175.0 252.3 L175.7 251.5 L176.4 252.2 L177.1 251.7 L177.8 251.6 L178.5 251.5 L179.2 251.7 L179.9 252.1 L180.6 251.6 L181.3 251.9 L182.0 252.0 L182.7 251.7 L183.4 251.9 L184.1 251.5 L184.8 251.5 L185.5 251.6 L186.2 252.0 L186.9 251.8 L187.6 251.7 L188.3 251.9 L189.0 251.8 L189.7 251.7 L190.4 252.1 L191.1 252.0 L191.8 251.6 L192.5 251.9 L193.2 251.9 L193.9 252.2 L194.6 252.1 L195.3 251.7 L196.0 252.3 L196.7 251.5 L197.4 251.8 L198.1 252.1 L198.8 251.6 L199.5 251.9 L200.2 251.5 L200.9 252.0 L201.6 252.1 L202.3 252.0 L203.0 252.3 L203.7 251.7 L204.4 252.1 L205.1 252.0 L205.8 252.0 L206.5 251.9 L207.2 252.3 L207.9 252.4 L208.6 251.9 L209.3 252.1 L210.0 251.6 L210.7 252.2 L211.4 252.1 L212.1 252.4 L212.8 252.3 L213.5 251.8 L214.2 251.9 L214.9 252.2 L215.6 251.6 L216.3 252.0 L217.0 251.7 L217.7 251.7 L218.4 251.6 L219.1 252.3 L219.8 251.7 L220.5 251.8 L221.2 252.0 L221.9 252.4 L222.6 251.7 L223.3 252.0 L224.0 252.1 L224.7 252.4 L225.4 252.4 L226.1 252.4 L226.8 251.9 L227.5 252.0 L228.2 252.0 L228.9 252.5 L229.6 252.5 L230.3 251.8 L231.0 251.8 L231.7 251.9 L232.4 251.9 L233.1 252.1 L233.8 252.2 L234.5 251.9 L235.2 251.7 L235.9 252.1 L236.6 252.0 L237.3 252.2 L238.0 252.6 L238.7 252.3 L239.4 252.2 L240.1 252.3 L240.8 252.3 L241.5 251.7 L242.2 252.5 L242.9 252.4 L243.6 252.5 L244.3 252.4 L245.0 252.0 L245.7 252.1 L246.4 251.8 L247.1 252.3 L247.8 251.7 L248.5 251.7 L249.2 251.9 L249.9 251.8 L250.6 252.0 L251.3 251.7 L252.0 251.7 L252.7 251.8 L253.4 251.7 L254.1 252.0 L254.8 251.7 L255.5 252.4 L256.2 252.2 L256.9 251.8 L257.6 251.9 L258.3 251.9 L259.0 251.9 L259.7 251.7 L260.4 252.4 L261.1 252.5 L261.8 252.0 L262.5 252.0 L263.2 251.7 L263.9 251.7 L264.6 251.9 L265.3 251.8 L266.0 252.3 L266.7 251.7 L267.4 251.6 L268.1 252.4 L268.8 252.0 L269.5 251.7 L270.2 252.0 L270.9 251.5 L271.6 252.0 L272.3 252.4 L273.0 252.3 L273.7 252.1 L274.4 251.7 L275.1 251.8 L275.8 251.6 L276.5 252.2 L277.2 251.9 L277.9 252.2 L278.6 251.8 L279.3 251.7 L280.0 252.2 L280.7 252.3 L281.4 252.2 L282.1 252.2 L282.8 252.2 L283.5 252.1 L284.2 251.6 L284.9 251.9 L285.6 251.7 L286.3 251.4 L287.0 251.4 L287.7 251.7 L288.4 251.6 L289.1 252.0 L289.8 252.3 L290.5 251.8 L291.2 252.2 L291.9 252.3 L292.6 252.3 L293.3 251.7 L294.0 251.6 L294.7 251.6 L295.4 251.6 L296.1 251.6 L296.8 252.0 L297.5 252.2 L298.2 252.2 L298.9 251.8 L299.6 252.0 L300.3 252.1 L301.0 251.5 L301.7 252.0 L302.4 252.2 L303.1 252.1 L303.8 252.1 L304.5 251.9 L305.2 251.6 L305.9 252.1 L306.6 251.7 L307.3 252.2 L308.0 252.3 L308.7 251.8 L309.4 251.8 L310.1 252.3 L310.8 252.1 L311.5 251.6 L312.2 251.6 L312.9 251.6 L313.6 252.3 L314.3 252.2 L315.0 251.6 L315.7 252.3 L316.4 252.4 L317.1 252.1 L317.8 251.8 L318.5 252.0 L319.2 251.7 L319.9 251.6 L320.6 252.4 L321.3 252.1 L322.0 252.0 L322.7 252.4 L323.4 252.0 L324.1 252.4 L324.8 252.3 L325.5 251.8 L326.2 251.8 L326.9 251.9 L327.6 251.8 L328.3 252.1 L329.0 251.9 L329.7 252.0 L330.4 251.8 L331.1 252.5 L331.8 252.0 L332.5 252.1 L333.2 252.2 L333.9 252.5 L334.6 252.0 L335.3 252.5 L336.0 252.1 L336.7 252.2 L337.4 252.1 L338.1 251.7 L338.8 252.1 L339.5 251.8 L340.2 251.7 L340.9 252.4 L341.6 251.8 L342.3 252.1 L343.0 252.3 L343.7 252.2 L344.4 252.0 L345.1 252.2 L345.8 252.2 L346.5 252.4 L347.2 251.8 L347.9 252.2 L348.6 251.9 L349.3 251.9 L350.0 252.4 L350.7 252.2 L351.4 252.2 L352.1 252.4 L352.8 252.5 L353.5 252.0 L354.2 252.2 L354.9 252.1 L355.6 252.1 L356.3 252.2 L357.0 252.0 L357.7 252.0 L358.4 251.9 L359.1 252.3 L359.8 252.1 L360.5 252.2 L361.2 252.3 L361.9 251.6 L362.6 251.9 L363.3 252.2 L364.0 252.1 L364.7 251.5 L365.4 251.4 L366.1 251.7 L366.8 251.3 L367.5 251.4 L368.2 251.1 L368.9 251.6 L369.6 251.6 L370.3 251.6 L371.0 250.9 L371.7 251.3 L372.4 251.2 L373.1 250.7 L373.8 251.3 L374.5 251.2 L375.2 250.4 L375.9 251.0 L376.6 250.3 L377.3 250.2 L378.0 250.5 L378.7 250.2 L379.4 249.4 L380.1 249.5 L380.8 249.4 L381.5 249.1 L382.2 248.9 L382.9 248.9 L383.6 249.1 L384.3 248.3 L385.0 248.6 L385.7 248.3 L386.4 247.7 L387.1 247.7 L387.8 247.7 L388.5 247.4 L389.2 246.7 L389.9 247.3 L390.6 246.9 L391.3 246.9 L392.0 245.9 L392.7 245.8 L393.4 245.3 L394.1 245.6 L394.8 244.7 L395.5 244.1 L396.2 243.9 L396.9 243.8 L397.6 243.3 L398.3 242.3 L399.0 241.8 L399.7 242.1 L400.4 241.5 L401.1 241.2 L401.8 240.1 L402.5 239.4 L403.2 239.2 L403.9 238.2 L404.6 237.2 L405.3 237.3 L406.0 236.3 L406.7 236.0 L407.4 234.8 L408.1 234.9 L408.8 233.5 L409.5 233.4 L410.2 232.1 L410.9 231.2 L411.6 230.6 L412.3 230.1 L413.0 228.9 L413.7 228.2 L414.4 227.9 L415.1 226.7 L415.8 225.7 L416.5 224.7 L417.2 223.5 L417.9 222.6 L418.6 221.8 L419.3 220.9 L420.0 220.7 L420.7 219.5 L421.4 218.7 L422.1 217.3 L422.8 216.3 L423.5 214.8 L424.2 213.8 L424.9 212.5 L425.6 212.1 L426.3 211.1 L427.0 209.9 L427.7 209.0 L428.4 208.1 L429.1 205.9 L429.8 205.1 L430.5 203.4 L431.2 202.3 L431.9 201.7 L432.6 200.2 L433.3 199.1 L434.0 197.9 L434.7 196.7 L435.4 194.6 L436.1 193.6 L436.8 192.1 L437.5 190.8 L438.2 189.5 L438.9 188.6 L439.6 187.3 L440.3 186.2 L441.0 184.9 L441.7 184.1 L442.4 182.2 L443.1 180.8 L443.8 179.4 L444.5 178.9 L445.2 177.9 L445.9 176.8 L446.6 175.3 L447.3 173.9 L448.0 172.5 L448.7 171.0 L449.4 169.1 L450.1 167.8 L450.8 166.2 L451.5 165.6 L452.2 164.6 L452.9 163.2 L453.6 161.6 L454.3 160.7 L455.0 158.6 L455.7 157.0 L456.4 155.1 L457.1 154.0 L457.8 152.7 L458.5 151.7 L459.2 150.5 L459.9 149.6 L460.6 147.8 L461.3 146.6 L462.0 145.0 L462.7 143.8 L463.4 142.1 L464.1 140.8 L464.8 140.0 L465.5 139.1 L466.2 138.4 L466.9 137.2 L467.6 136.1 L468.3 134.6 L469.0 133.2 L469.7 132.0 L470.4 130.3 L471.1 129.1 L471.8 128.8 L472.5 127.3 L473.2 127.0 L473.9 125.9 L474.6 124.3 L475.3 123.9 L476.0 122.9 L476.7 121.8 L477.4 121.1 L478.1 120.6 L478.8 119.4 L479.5 119.0 L480.2 118.1 L480.9 117.6 L481.6 116.8 L482.3 116.0 L483.0 115.2 L483.7 114.9 L484.4 114.2 L485.1 113.7 L485.8 112.6 L486.5 111.7 L487.2 111.0 L487.9 110.5 L488.6 109.7 L489.3 109.8 L490.0 109.2 L490.7 109.0 L491.4 108.6 L492.1 108.3 L492.8 107.7 L493.5 106.8 L494.2 107.1 L494.9 106.6 L495.6 106.0 L496.3 105.7 L497.0 105.5 L497.7 104.8 L498.4 105.2 L499.1 104.5 L499.8 104.1 L500.5 103.9 L501.2 104.1 L501.9 103.4 L502.6 103.6 L503.3 103.6 L504.0 103.1 L504.7 102.9 L505.4 102.8 L506.1 102.9 L506.8 102.8 L507.5 102.5 L508.2 102.4 L508.9 101.8 L509.6 101.8 L510.3 101.8 L511.0 102.2 L511.7 101.8 L512.4 102.0 L513.1 101.5 L513.8 101.5 L514.5 101.6 L515.2 101.9 L515.9 101.9 L516.6 101.9 L517.3 101.6 L518.0 101.8 L518.7 101.8 L519.4 101.8 L520.1 101.4 L520.8 102.1 L521.5 101.5 L522.2 102.2 L522.9 102.2 L523.6 101.4 L524.3 101.8 L525.0 102.1 L525.7 102.3 L526.4 101.8 L527.1 101.6 L527.8 101.6 L528.5 102.3 L529.2 101.6 L529.9 101.9 L530.6 101.5 L531.3 101.9 L532.0 102.3 L532.7 101.6 L533.4 102.2 L534.1 101.9 L534.8 102.3 L535.5 102.1 L536.2 101.7 L536.9 102.3 L537.6 101.9 L538.3 101.5 L539.0 101.5 L539.7 101.9 L540.4 101.9 L541.1 101.8 L541.8 101.6 L542.5 101.8 L543.2 101.8 L543.9 102.3 L544.6 101.5 L545.3 102.2 L546.0 102.3 L546.7 101.7 L547.4 102.4 L548.1 102.2 L548.8 102.4 L549.5 101.8 L550.2 101.9 L550.9 101.9 L551.6 102.5 L552.3 102.1 L553.0 101.9 L553.7 102.0 L554.4 101.8 L555.1 101.6 L555.8 101.7 L556.5 102.3 L557.2 101.9 L557.9 102.4 L558.6 101.8 L559.3 101.8 L560.0 102.1 L560.7 101.8 L561.4 101.9 L562.1 102.5 L562.8 102.4 L563.5 102.3 L564.2 102.2 L564.9 102.4 L565.6 102.4 L566.3 102.1 L567.0 102.2 L567.7 101.6 L568.4 102.2 L569.1 102.0 L569.8 102.3 L570.5 102.2 L571.2 101.8 L571.9 101.6 L572.6 102.4 L573.3 101.7 L574.0 102.0 L574.7 101.9 L575.4 101.8 L576.1 102.2 L576.8 102.4 L577.5 101.8 L578.2 102.1 L578.9 101.8 L579.6 102.0 L580.3 101.9 L581.0 101.7 L581.7 101.6 L582.4 101.7 L583.1 102.3 L583.8 101.9 L584.5 101.7 L585.2 102.3 L585.9 102.4 L586.6 101.9 L587.3 101.6 L588.0 101.6 L588.7 101.5 L589.4 101.7 L590.1 101.5 L590.8 101.6 L591.5 101.6 L592.2 101.9 L592.9 102.2 L593.6 102.1 L594.3 101.8 L595.0 101.8 L595.7 101.9 L596.4 101.7 L597.1 101.7 L597.8 101.4 L598.5 101.6 L599.2 102.2 L599.9 101.5 L600.6 101.8 L601.3 101.9 L602.0 102.1 L602.7 101.5 L603.4 101.6 L604.1 101.5 L604.8 101.7 L605.5 101.7 L606.2 102.2 L606.9 102.1 L607.6 102.1 L608.3 101.3 L609.0 101.3 L609.7 101.9 L610.4 102.1 L611.1 101.7 L611.8 101.8 L612.5 101.3 L613.2 101.7 L613.9 102.1 L614.6 102.0 L615.3 102.1 L616.0 102.2 L616.7 101.5 L617.4 101.4 L618.1 101.4 L618.8 101.8 L619.5 101.9 L620.2 102.2 L620.9 102.0 L621.6 101.9 L622.3 102.0 L623.0 101.7 L623.7 101.8" fill="none" stroke="#f6f284" stroke-width="1.65" stroke-linejoin="round"/><path d="M392.4 83 V270" stroke="#f4f2b0" stroke-width="1.1"/><path d="M445.5 84.6 V270" stroke="#e4e2a8" stroke-width="1" stroke-dasharray="2.6 1.7"/><rect x="388.2" y="269.2" width="8" height="5.6" fill="#e8e490"/><text x="392.2" y="274" font-size="5.2" font-weight="bold" fill="#222" text-anchor="middle" font-family="Liberation Sans,sans-serif">X1</text><rect x="441.4" y="269.2" width="8" height="5.6" fill="#e8e490"/><text x="445.4" y="274" font-size="5.2" font-weight="bold" fill="#222" text-anchor="middle" font-family="Liberation Sans,sans-serif">X2</text><rect x="149" y="174.6" width="4.8" height="5.6" fill="#d8d828"/><text x="149.5" y="179.3" font-size="5.4" font-weight="bold" fill="#111" font-family="Liberation Sans,sans-serif">C</text><text x="154.3" y="179.6" font-size="6" font-weight="bold" fill="#d8d828" font-family="Liberation Sans,sans-serif">1</text><path d="M157.6 175.6 L160 177.4 L157.6 179.2" fill="none" stroke="#d8d828" stroke-width=".8"/><path d="M624.7 177.4 h3.4" stroke="#d8c860" stroke-width="1"/><text x="630.3" y="180" font-size="6.6" font-weight="bold" fill="#f2f2f2" font-family="Liberation Sans,sans-serif">T</text><text x="160" y="287.4" font-size="9" fill="#5a86b0" font-family="Liberation Serif,serif">T</text><path d="M166 284.3 H315" stroke="#4a4a4a" stroke-width=".9" stroke-dasharray="1.4 1.6"/><rect x="229" y="280" width="18" height="8" fill="#000"/><text x="231.2" y="286.6" font-size="6.4" font-weight="bold" fill="#c86c3e" font-family="Liberation Sans,sans-serif">1 ms</text><path d="M316.3 284.3 H624.7" stroke="#484848" stroke-width="1"/><path d="M316.3 281 V287.6 M314.8 281 H317.8 M314.8 287.6 H317.8 M624.7 280.6 V288" stroke="#8a8a8a" stroke-width=".9"/><path d="M469.6 283.6 L467 287 H472.2 Z" fill="#e06838"/></svg>
<div class="t b" style="left:546.8px;top:53.25px;font-size:6.7px;color:#e8e878;">Ch1</div>
<div class="t b" style="left:562.5px;top:53.25px;font-size:6.7px;color:#e8e878;">/</div>
<div class="t b" style="left:573.6px;top:53.25px;font-size:6.7px;color:#f0f0f0;">Edge</div>
<div class="t b" style="left:608.5px;top:53.25px;font-size:6.7px;color:#e8e060;">High</div>
<div class="t b" style="left:546.8px;top:63.35px;font-size:6.7px;color:#5a68f0;">Trig'd</div>
<div class="t b" style="left:581.5px;top:63.35px;font-size:6.7px;color:#e8e060;">f=80 MHz</div>
<div class="a" style="left:145.3px;top:300.9px;width:491.5px;height:60.4px;border:1px solid #d8d8d8;border-right-color:#000;border-radius:2px 0 0 2px"></div>
<div class="a" style="left:150.2px;top:295.6px;width:31.2px;height:9.8px;background:#4a78d2;border:1px solid #8fb0ee;border-radius:1.4px"><div class="t b" style="left:-2px;right:-2px;text-align:center;top:0.35px;font-size:7.5px;color:#fff">Marker</div></div>
<div class="a" style="left:183.2px;top:295.6px;width:27.8px;height:9.8px;background:#000;border:1px solid #c8c8c8;border-radius:1.4px"><div class="t b" style="left:-2px;right:-2px;text-align:center;top:0.35px;font-size:7.5px;color:#fff">Scales</div></div>
<div class="a" style="left:558.6px;top:295.6px;width:17.8px;height:9.8px;background:#000;border:1px solid #c8c8c8;border-radius:1.4px"><div class="t b" style="left:-2px;right:-2px;text-align:center;top:0.35px;font-size:7.5px;color:#fff">Auto</div></div>
<div class="a" style="left:578.4px;top:295.6px;width:18px;height:9.8px;background:#000;border:1px solid #c8c8c8;border-radius:1.4px"><div class="t b" style="left:-2px;right:-2px;text-align:center;top:0.35px;font-size:7.5px;color:#fff">Max</div></div>
<div class="a" style="left:598.2px;top:295.6px;width:18px;height:9.8px;background:#4a78d2;border:1px solid #8fb0ee;border-radius:1.4px"><div class="t b" style="left:-2px;right:-2px;text-align:center;top:0.35px;font-size:7.5px;color:#fff">Mid</div></div>
<div class="a" style="left:618.2px;top:295.6px;width:17.6px;height:9.8px;background:#000;border:1px solid #c8c8c8;border-radius:1.4px"><div class="t b" style="left:-2px;right:-2px;text-align:center;top:0.35px;font-size:7.5px;color:#fff">Min</div></div>
<div class="t b" style="left:188px;top:309.20px;font-size:6.8px;color:#e4e468;">XM1 = 1 ms</div>
<div class="t b" style="left:280.4px;top:309.20px;font-size:6.8px;color:#e4e468;">XM2 = 1.00001 ms</div>
<div class="t b" style="left:372.6px;top:309.20px;font-size:6.8px;color:#e4e468;">dXM = 5.75 ns</div>
<div class="t b" style="left:474.6px;top:309.20px;font-size:6.8px;color:#e4e468;">1 / dXM = 173.913 MHz</div>
<div class="a" style="left:143.2px;top:363.1px;width:495.8px;height:91.9px;background:#ececec;"></div>
<div class="a" style="left:143.2px;top:363.1px;width:495.8px;height:0.8px;background:#d4d4d4;"></div>
<div class="btn sel" style="left:145.2px;top:366.5px;width:17.8px;height:24px"><div class="lbl" style="left:0;right:0;text-align:center;top:2.1px;font-size:6.9px">Ch1</div><div class="a" style="left:3.4px;top:13.4px;width:7.8px;height:6.2px;background:#f0ec60;border:1px solid #555"></div></div>
<div class="fld" style="left:165.2px;top:366.5px;width:56.6px;height:11.7px;border-radius:1.5px 1.5px 0 0"></div>
<div class="t b" style="left:168.7px;top:369.10px;font-size:6.9px;color:#e6e66a;">100 mV/div</div>
<div class="a" style="left:165.2px;top:378.2px;width:56.6px;height:2.5px;background:#fbfbfb;"></div>
<div class="a" style="left:165.2px;top:378.2px;width:40.4px;height:2.3px;background:linear-gradient(#6e44b0,#9460d0);"></div>
<div class="a" style="left:165.2px;top:380.1px;width:56.6px;height:10.8px;border:1px solid #8c8c8c;border-radius:0 0 2px 2px;background:linear-gradient(#ffffff,#f0f0f0 45%,#dadada);box-shadow:0 1px 0 rgba(0,0,0,.18)"></div>
<svg style="left:0;top:0" width="782" height="455"><polygon points="169.23,384.00 173.23,384.00 171.23,387.20" fill="#333"/><path d="M177.26 380.90000000000003 V390.1" stroke="#9a9a9a" stroke-width=".8"/><polygon points="181.48,387.20 185.48,387.20 183.48,384.00" fill="#333"/><path d="M189.71 380.90000000000003 V390.1" stroke="#9a9a9a" stroke-width=".8"/><text x="194.09" y="388.50" font-size="8.3" fill="#333" text-anchor="middle" textLength="4.3" lengthAdjust="spacingAndGlyphs" font-family="Liberation Sans,sans-serif">D</text><path d="M198.48 380.90000000000003 V390.1" stroke="#9a9a9a" stroke-width=".8"/><polygon points="201.61,383.44 207.01,383.44 204.31,387.76" fill="#333"/><path d="M210.14 380.90000000000003 V390.1" stroke="#9a9a9a" stroke-width=".8"/><polygon points="213.27,387.76 218.67,387.76 215.97,383.44" fill="#333"/></svg>
<div class="btn" style="left:225.3px;top:366.5px;width:17.6px;height:24px"><div class="lbl" style="left:0;right:0;text-align:center;top:2.1px;font-size:6.9px">Ch2</div><div class="a" style="left:3.4px;top:13.4px;width:7.6px;height:6.2px;background:#84f0f8;border:1px solid #444"></div></div>
<div class="a" style="left:244.6px;top:366.5px;width:56.8px;height:13.8px;border:1px solid #d6d6d6;border-radius:2px 2px 0 0;background:#f0f0f0"></div>
<div class="t b" style="left:255px;top:369.15px;font-size:6.9px;color:#cccccc;">100 mV/div</div>
<div class="a" style="left:244.6px;top:380.1px;width:56.8px;height:10.8px;border:1px solid #d6d6d6;border-radius:0 0 2px 2px;background:linear-gradient(#fdfdfd,#f2f2f2);"></div>
<svg style="left:0;top:0" width="782" height="455"><polygon points="248.65,384.00 252.65,384.00 250.65,387.20" fill="#d0d0d0"/><path d="M256.70 380.90000000000003 V390.1" stroke="#dedede" stroke-width=".8"/><polygon points="260.95,387.20 264.95,387.20 262.95,384.00" fill="#d0d0d0"/><path d="M269.19 380.90000000000003 V390.1" stroke="#dedede" stroke-width=".8"/><text x="273.60" y="388.50" font-size="8.3" fill="#d0d0d0" text-anchor="middle" textLength="4.3" lengthAdjust="spacingAndGlyphs" font-family="Liberation Sans,sans-serif">D</text><path d="M278.00 380.90000000000003 V390.1" stroke="#dedede" stroke-width=".8"/><polygon points="281.15,383.44 286.55,383.44 283.85,387.76" fill="#d0d0d0"/><path d="M289.70 380.90000000000003 V390.1" stroke="#dedede" stroke-width=".8"/><polygon points="292.85,387.76 298.25,387.76 295.55,383.44" fill="#d0d0d0"/></svg>
<div class="btn sel" style="left:145.2px;top:398.2px;width:18px;height:9.6px;border-radius:2px 2px 0 0"><div class="lbl" style="left:0;right:0;text-align:center;top:-0.00px;font-size:6.9px;">Pos</div></div>
<div class="btn" style="left:145.2px;top:407.6px;width:18px;height:9.2px;border-radius:0 0 2px 2px"><div class="lbl" style="left:0;right:0;text-align:center;top:-0.20px;font-size:6.9px;">Ofs</div></div>
<div class="fld" style="left:165.2px;top:394.8px;width:56.6px;height:11.2px;border-radius:1.5px 1.5px 0 0"></div>
<div class="t b" style="left:170.2px;top:397.15px;font-size:6.9px;color:#e6e66a;">0 div</div>
<div class="a" style="left:165.2px;top:406px;width:56.6px;height:2.4px;background:#fbfbfb;"></div>
<div class="a" style="left:193px;top:406px;width:1px;height:1px;background:#b08080;"></div>
<div class="a" style="left:165.2px;top:408.2px;width:56.6px;height:11.2px;border:1px solid #8c8c8c;border-radius:0 0 2px 2px;background:linear-gradient(#ffffff,#f0f0f0 45%,#dadada);box-shadow:0 1px 0 rgba(0,0,0,.18)"></div>
<svg style="left:0;top:0" width="782" height="455"><polygon points="169.23,412.30 173.23,412.30 171.23,415.50" fill="#333"/><path d="M177.26 409.0 V418.59999999999997" stroke="#9a9a9a" stroke-width=".8"/><polygon points="181.48,415.50 185.48,415.50 183.48,412.30" fill="#333"/><path d="M189.71 409.0 V418.59999999999997" stroke="#9a9a9a" stroke-width=".8"/><text x="194.09" y="416.80" font-size="8.3" fill="#333" text-anchor="middle" textLength="4.3" lengthAdjust="spacingAndGlyphs" font-family="Liberation Sans,sans-serif">0</text><path d="M198.48 409.0 V418.59999999999997" stroke="#9a9a9a" stroke-width=".8"/><polygon points="201.61,411.74 207.01,411.74 204.31,416.06" fill="#333"/><path d="M210.14 409.0 V418.59999999999997" stroke="#9a9a9a" stroke-width=".8"/><polygon points="213.27,416.06 218.67,416.06 215.97,411.74" fill="#333"/></svg>
<div class="btn dis" style="left:225.3px;top:398.2px;width:17.6px;height:9.6px;background:#e2e2e2;border-radius:2px 2px 0 0"><div class="lbl" style="left:0;right:0;text-align:center;top:-0.00px;font-size:6.9px;">Pos</div></div>
<div class="btn dis" style="left:225.3px;top:407.6px;width:17.6px;height:9.2px;border-radius:0 0 2px 2px"><div class="lbl" style="left:0;right:0;text-align:center;top:-0.20px;font-size:6.9px;">Ofs</div></div>
<div class="a" style="left:244.6px;top:394.8px;width:56.8px;height:13.6px;border:1px solid #d6d6d6;border-radius:2px 2px 0 0;background:#f0f0f0"></div>
<div class="t b" style="left:265.8px;top:397.35px;font-size:6.9px;color:#cccccc;">0 div</div>
<div class="a" style="left:244.6px;top:408.2px;width:56.8px;height:11.2px;border:1px solid #d6d6d6;border-radius:0 0 2px 2px;background:linear-gradient(#fdfdfd,#f2f2f2);"></div>
<svg style="left:0;top:0" width="782" height="455"><polygon points="248.65,412.30 252.65,412.30 250.65,415.50" fill="#d0d0d0"/><path d="M256.70 409.0 V418.59999999999997" stroke="#dedede" stroke-width=".8"/><polygon points="260.95,415.50 264.95,415.50 262.95,412.30" fill="#d0d0d0"/><path d="M269.19 409.0 V418.59999999999997" stroke="#dedede" stroke-width=".8"/><text x="273.60" y="416.80" font-size="8.3" fill="#d0d0d0" text-anchor="middle" textLength="4.3" lengthAdjust="spacingAndGlyphs" font-family="Liberation Sans,sans-serif">0</text><path d="M278.00 409.0 V418.59999999999997" stroke="#dedede" stroke-width=".8"/><polygon points="281.15,411.74 286.55,411.74 283.85,416.06" fill="#d0d0d0"/><path d="M289.70 409.0 V418.59999999999997" stroke="#dedede" stroke-width=".8"/><polygon points="292.85,416.06 298.25,416.06 295.55,411.74" fill="#d0d0d0"/></svg>
<div class="fld" style="left:414.2px;top:366.5px;width:56.4px;height:11.4px;border-radius:1.5px 1.5px 0 0"></div>
<div class="t b" style="left:417.2px;top:368.95px;font-size:6.9px;color:#f2f2f2;">5 ns/div</div>
<div class="a" style="left:414.2px;top:377.9px;width:56.4px;height:2.5px;background:#fbfbfb;"></div>
<div class="a" style="left:414.2px;top:377.9px;width:38px;height:2.3px;background:linear-gradient(#6e44b0,#9460d0);"></div>
<div class="a" style="left:414.2px;top:380.3px;width:56.4px;height:10.6px;border:1px solid #8c8c8c;border-radius:0 0 2px 2px;background:linear-gradient(#ffffff,#f0f0f0 45%,#dadada);box-shadow:0 1px 0 rgba(0,0,0,.18)"></div>
<svg style="left:0;top:0" width="782" height="455"><polygon points="421.81,383.70 421.81,387.70 418.61,385.70" fill="#333"/><path d="M426.21 381.1 V390.1" stroke="#9a9a9a" stroke-width=".8"/><polygon points="430.82,383.70 430.82,387.70 434.02,385.70" fill="#333"/><path d="M438.62 381.1 V390.1" stroke="#9a9a9a" stroke-width=".8"/><text x="442.99" y="388.60" font-size="8.3" fill="#333" text-anchor="middle" textLength="4.3" lengthAdjust="spacingAndGlyphs" font-family="Liberation Sans,sans-serif">D</text><path d="M447.36 381.1 V390.1" stroke="#9a9a9a" stroke-width=".8"/><polygon points="455.33,383.00 455.33,388.40 451.01,385.70" fill="#333"/><path d="M458.98 381.1 V390.1" stroke="#9a9a9a" stroke-width=".8"/><polygon points="462.63,383.00 462.63,388.40 466.95,385.70" fill="#333"/></svg>
<div class="btn" style="left:391.8px;top:398.4px;width:20.4px;height:9.4px;border-radius:2px 2px 0 0"><div class="lbl" style="left:0;right:0;text-align:center;top:-0.10px;font-size:6.9px;">Pos</div></div>
<div class="btn sel" style="left:391.8px;top:407.6px;width:20.4px;height:9.2px;border-radius:0 0 2px 2px"><div class="lbl" style="left:0;right:0;text-align:center;top:-0.20px;font-size:6.9px;">Delay</div></div>
<div class="fld" style="left:414.2px;top:395px;width:56.4px;height:11.6px;border-radius:1.5px 1.5px 0 0"></div>
<div class="t b" style="left:417.2px;top:397.55px;font-size:6.9px;color:#f2f2f2;">1 ms</div>
<div class="a" style="left:414.2px;top:406.6px;width:56.4px;height:2.4px;background:#fbfbfb;"></div>
<div class="a" style="left:442px;top:406.6px;width:1px;height:1px;background:#b08080;"></div>
<div class="a" style="left:414.2px;top:408.8px;width:56.4px;height:10.8px;border:1px solid #8c8c8c;border-radius:0 0 2px 2px;background:linear-gradient(#ffffff,#f0f0f0 45%,#dadada);box-shadow:0 1px 0 rgba(0,0,0,.18)"></div>
<svg style="left:0;top:0" width="782" height="455"><polygon points="421.81,412.30 421.81,416.30 418.61,414.30" fill="#333"/><path d="M426.21 409.6 V418.8" stroke="#9a9a9a" stroke-width=".8"/><polygon points="430.82,412.30 430.82,416.30 434.02,414.30" fill="#333"/><path d="M438.62 409.6 V418.8" stroke="#9a9a9a" stroke-width=".8"/><text x="442.99" y="417.20" font-size="8.3" fill="#333" text-anchor="middle" textLength="4.3" lengthAdjust="spacingAndGlyphs" font-family="Liberation Sans,sans-serif">0</text><path d="M447.36 409.6 V418.8" stroke="#9a9a9a" stroke-width=".8"/><polygon points="455.33,411.60 455.33,417.00 451.01,414.30" fill="#333"/><path d="M458.98 409.6 V418.8" stroke="#9a9a9a" stroke-width=".8"/><polygon points="462.63,411.60 462.63,417.00 466.95,414.30" fill="#333"/></svg>
<div class="btn sel" style="left:554.3px;top:366.4px;width:25px;height:10px;border-radius:2px 2px 0 0"><div class="lbl" style="left:0;right:0;text-align:center;top:0.20px;font-size:6.9px;">Ch1</div></div>
<div class="btn" style="left:554.3px;top:376.2px;width:25px;height:10px;border-radius:0"><div class="lbl" style="left:0;right:0;text-align:center;top:0.20px;font-size:6.9px;">Ch2</div></div>
<div class="a" style="left:554.3px;top:386px;width:25px;height:10px;border:1px solid #c4c4c4;border-top:0;background:#eeeeee"></div>
<div class="btn" style="left:554.3px;top:395.6px;width:25px;height:10px;border-radius:0 0 2px 2px"><div class="lbl" style="left:0;right:0;text-align:center;top:0.20px;font-size:6.9px;">Ext</div></div>
<div class="fld" style="left:582px;top:366.4px;width:57px;height:11.6px;border-radius:1.5px 1.5px 0 0"></div>
<div class="t b" style="left:586.5px;top:368.95px;font-size:6.9px;color:#e6e66a;">0 V</div>
<div class="a" style="left:582px;top:378px;width:57px;height:3px;background:#fbfbfb;"></div>
<div class="a" style="left:609.5px;top:378px;width:1px;height:1.2px;background:#b06060;"></div>
<div class="a" style="left:582px;top:380.8px;width:57px;height:10.6px;border:1px solid #8c8c8c;border-radius:0 0 2px 2px;background:linear-gradient(#ffffff,#f0f0f0 45%,#dadada);box-shadow:0 1px 0 rgba(0,0,0,.18)"></div>
<svg style="left:0;top:0" width="782" height="455"><polygon points="585.90,384.60 589.90,384.60 587.90,387.80" fill="#333"/><path d="M593.80 381.6 V390.6" stroke="#9a9a9a" stroke-width=".8"/><polygon points="597.70,387.80 601.70,387.80 599.70,384.60" fill="#333"/><path d="M605.60 381.6 V390.6" stroke="#9a9a9a" stroke-width=".8"/><text x="609.90" y="389.10" font-size="8.3" fill="#333" text-anchor="middle" textLength="4.3" lengthAdjust="spacingAndGlyphs" font-family="Liberation Sans,sans-serif">0</text><path d="M614.20 381.6 V390.6" stroke="#9a9a9a" stroke-width=".8"/><polygon points="617.40,384.04 622.80,384.04 620.10,388.36" fill="#333"/><path d="M626.00 381.6 V390.6" stroke="#9a9a9a" stroke-width=".8"/><polygon points="629.80,388.36 635.20,388.36 632.50,384.04" fill="#333"/></svg>
<div class="btn sel" style="left:582px;top:394.5px;width:29.8px;height:11.2px;border-radius:2px 0 0 2px"><div class="lbl" style="left:0;right:0;text-align:center;top:0.80px;font-size:6.9px;">Freerun</div></div>
<div class="btn" style="left:611.5px;top:394.5px;width:28px;height:11.2px;border-radius:0"><div class="lbl" style="left:0;right:0;text-align:center;top:0.80px;font-size:6.9px;">Trig'd</div></div>
<div class="btn sel" style="left:554.3px;top:408.8px;width:28.4px;height:10.8px;border-radius:2px 0 0 2px"><div class="lbl" style="left:0;right:0;text-align:center;top:0.60px;font-size:6.9px;">Pos</div></div>
<div class="btn" style="left:582.4px;top:408.8px;width:29.4px;height:10.8px;border-radius:0"><div class="lbl" style="left:0;right:0;text-align:center;top:0.60px;font-size:6.9px;">Neg</div></div>
<div class="btn" style="left:611.5px;top:408.8px;width:28px;height:10.8px;border-radius:0"><div class="lbl" style="left:0;right:0;text-align:center;top:0.60px;font-size:6.9px;">Bislope</div></div>
<div class="btn" style="left:145.4px;top:423.7px;width:62.59999999999998px;height:12.1px;border-radius:0"><svg style="left:3px;top:0.45px" width="10" height="9.2" viewBox="0 0 11 10"><rect x=".3" y=".3" width="10.4" height="9.4" fill="#8a8468"/><path d="M2 2 L8.6 8.2" stroke="#e8c860" stroke-width="2.6"/><path d="M2.6 2.4 L8.2 7.8" stroke="#a07820" stroke-width=".8" stroke-dasharray="1 1"/></svg><div class="lbl" style="left:17.9px;top:1.55px;font-size:7px;">Channels</div></div>
<div class="btn" style="left:207.2px;top:423.7px;width:62.499999999999986px;height:12.1px;border-radius:0"><svg style="left:1.6px;top:0.85px" width="13.4" height="8.4" viewBox="0 0 13.4 8.4"><path d="M.5 8.2 V4 M.5 4 C.5 1.4 1 .8 1.8 .8 C2.8 .8 3 1.6 3 4 V8.2" fill="none" stroke="#181818" stroke-width=".95"/><path d="M3.9 8.2 V3 C3.9 1 4.2 .8 5 .8 C5.9 .8 6.2 1.2 6.2 3 V8.2" fill="none" stroke="#d02020" stroke-width=".95"/><path d="M7.2 8.2 V3 C7.2 1 7.5 .8 8.4 .8 C9.3 .8 9.6 1.2 9.6 3 V8.2" fill="none" stroke="#18a8a8" stroke-width=".95"/><path d="M10.5 8.2 V3 C10.5 1 10.8 .8 11.7 .8 C12.6 .8 12.9 1.2 12.9 3 V8.2" fill="none" stroke="#1c2cd0" stroke-width=".95"/><path d="M3 6.6 H3.9 M6.2 6.6 H7.2 M9.6 6.6 H10.5" stroke="#30a030" stroke-width=".8"/></svg><div class="lbl" style="left:17.8px;top:1.55px;font-size:7px;">Acquire</div></div>
<div class="btn" style="left:268.9px;top:423.7px;width:62.50000000000004px;height:12.1px;border-radius:0"><svg style="left:2px;top:0.45px" width="14.4" height="9.2" viewBox="0 0 13 9"><path d="M.5 8 H6.5 V1.2 H12.5" fill="none" stroke="#2030d0" stroke-width="1.2"/><path d="M2.2 4.6 H10.6 M4.4 3 L2.4 4.6 L4.4 6.2 M8.6 3 L10.6 4.6 L8.6 6.2" fill="none" stroke="#d02020" stroke-width="1"/></svg><div class="lbl" style="left:18.4px;top:1.55px;font-size:7px;">Trigger</div></div>
<div class="btn" style="left:330.6px;top:423.7px;width:62.8px;height:12.1px;border-radius:0"><svg style="left:1.6px;top:0.55px" width="14" height="9" viewBox="0 0 13 9"><rect width="13" height="8" fill="#101010"/><rect x="1.6" y="1.8" width="9.8" height="4.4" fill="none" stroke="#38c838" stroke-width=".9" stroke-dasharray="2.2 .9"/><rect x="2.5" y="8" width="8" height="1" fill="#303030"/></svg><div class="lbl" style="left:18px;top:1.55px;font-size:7px;">Display</div></div>
<div class="btn sel" style="left:392.6px;top:423.7px;width:62.59999999999995px;height:12.1px;border-radius:0"><svg style="left:4.6px;top:0.3px" width="9.5" height="9.5" viewBox="0 0 10 10"><path d="M.5 .5 H8.4 L9.5 1.6 V9.5 H.5 Z" fill="#4a4a66" stroke="#33334a" stroke-width=".6"/><rect x="2.2" y=".8" width="5.2" height="3" fill="#f2f2f6"/><rect x="1.6" y="5.4" width="6.8" height="3.8" fill="#b8a8f0"/></svg><div class="lbl" style="left:18.1px;top:1.55px;font-size:7px;">Save/Recall</div></div>
<div class="btn sel" style="left:454.4px;top:423.7px;width:62.50000000000004px;height:12.1px;border-radius:0"><svg style="left:2.2px;top:0.3px" width="13.5" height="9.5" viewBox="0 0 14 10"><rect width="14" height="10" fill="#fff"/><path d="M.8 8.6 C4 8.6 4.4 1.4 7 1.4 C9.6 1.4 10 8.6 13.2 8.6" fill="none" stroke="#2020b8" stroke-width="1.1"/><path d="M4.6 1 V9.4 M9.4 1 V9.4" stroke="#d02020" stroke-width=".8" stroke-dasharray="1.2 1"/></svg><div class="lbl" style="left:18.9px;top:1.55px;font-size:7px;">Marker</div></div>
<div class="btn" style="left:516.1px;top:423.7px;width:62.09999999999995px;height:12.1px;border-radius:0"><svg style="left:2.6px;top:1.05px" width="11.5" height="8" viewBox="0 0 12 8"><path d="M1.4 0 V8 M5.2 0 V8" stroke="#1418a8" stroke-width="1.5"/><path d="M1.4 4.8 H5.2" stroke="#1418a8" stroke-width="1.3"/><path d="M5.2 2 H11.8" stroke="#1418a8" stroke-width="1.4"/></svg><div class="lbl" style="left:18.6px;top:1.55px;font-size:7px;">Measure</div></div>
<div class="btn" style="left:577.4px;top:423.7px;width:62.8px;height:12.1px;border-radius:0"><svg style="left:3.4000000000000004px;top:0.55px" width="11" height="9" viewBox="0 0 11 9"><text x="0" y="7.6" font-size="9.5" font-style="italic" font-weight="bold" fill="#111" font-family="Liberation Serif,serif">f</text><text x="4.2" y="7.6" font-size="5.5" fill="#111" font-family="Liberation Sans,sans-serif">(x)</text></svg><div class="lbl" style="left:18.9px;top:1.55px;font-size:7px;">Math</div></div>
<div class="btn" style="left:145.4px;top:435.3px;width:62.59999999999998px;height:12.1px;border-radius:0"><svg style="left:1.6px;top:0.45px" width="13.4" height="9.2" viewBox="0 0 13.4 9.2"><path d="M0 9.2 H13.4 L11.6 8 L10 6.4 L8.6 4.2 L7.4 1 L6.7 0 L6 1 L4.8 4.2 L3.4 6.4 L1.8 8 Z" fill="#dc1c1c"/><path d="M6.7 1.4 V9.2" stroke="#f06060" stroke-width=".8"/></svg><div class="lbl" style="left:17.9px;top:1.55px;font-size:7px;">Histogram</div></div>
<div class="btn" style="left:207.2px;top:435.3px;width:62.499999999999986px;height:12.1px;border-radius:0"><svg style="left:1.6px;top:1.25px" width="14" height="7.6" viewBox="0 0 14 7.6"><rect x=".4" y=".6" width="13.2" height="6.4" fill="#fff"/><path d="M.2 .6 H13.8 M.2 7 H13.8" stroke="#1a26c4" stroke-width="1.2"/><path d="M.8 .8 L6.6 6.8 M6.6 .8 L.8 6.8 M7.4 .8 L13.2 6.8 M13.2 .8 L7.4 6.8" fill="none" stroke="#1a26c4" stroke-width="1.35"/></svg><div class="lbl" style="left:17.8px;top:1.55px;font-size:7px;">Eye Diagram</div></div>
<div class="btn" style="left:268.9px;top:435.3px;width:62.50000000000004px;height:12.1px;border-radius:0"><svg style="left:2px;top:1.25px" width="14" height="7.6" viewBox="0 0 14 7.6"><rect x=".4" y=".6" width="13.2" height="6.4" fill="#b4bcf2"/><path d="M.2 .6 H13.8 M.2 7 H13.8" stroke="#2a36c8" stroke-width="1.2"/><path d="M.8 .8 L6.6 6.8 M6.6 .8 L.8 6.8 M7.4 .8 L13.2 6.8 M13.2 .8 L7.4 6.8" fill="none" stroke="#2a36c8" stroke-width="1.3"/><rect x="5" y="2.9" width="4" height="1.8" fill="#7a84e0"/></svg><div class="lbl" style="left:18.4px;top:1.55px;font-size:7px;">Mask Test</div></div>
<div class="a" style="left:330.6px;top:435.3px;width:62.8px;height:12.1px;border:1px solid #c2c2c2;background:#efefef"></div>
<div class="a" style="left:392.6px;top:435.3px;width:62.59999999999995px;height:12.1px;border:1px solid #c2c2c2;background:#efefef"></div>
<div class="a" style="left:454.4px;top:435.3px;width:62.50000000000004px;height:12.1px;border:1px solid #c2c2c2;background:#efefef"></div>
<div class="a" style="left:516.1px;top:435.3px;width:62.09999999999995px;height:12.1px;border:1px solid #c2c2c2;background:#efefef"></div>
<div class="btn" style="left:577.4px;top:435.3px;width:62.8px;height:12.1px;border-radius:0"><svg style="left:4.2px;top:0.05px" width="11" height="10" viewBox="0 0 11 10"><path d="M1.2 9 L6 4.2" stroke="#1838c8" stroke-width="2.2" stroke-linecap="round"/><path d="M5.2 3 A2.8 2.8 0 0 1 9.6 .8 L7.8 2.6 L8.6 3.6 L10.4 1.8 A2.8 2.8 0 0 1 6.8 5.4 Z" fill="#1838c8"/></svg><div class="lbl" style="left:18.9px;top:1.55px;font-size:7px;">Utility</div></div>
<div class="a" style="left:143.2px;top:454px;width:496px;height:1px;background:#9c9c9c;"></div>
<div class="a" style="left:639.2px;top:32px;width:142.8px;height:423px;background:#fff;"></div>
<div class="a" style="left:639.2px;top:32px;width:142.8px;height:34px;background:#d2d2d2;"></div>
<div class="a" style="left:779.4px;top:66px;width:1.4px;height:389px;background:#e4e4e4;"></div>
<div class="a" style="left:780.8px;top:0px;width:1.2px;height:455px;background:#b4b4b4;"></div>
<div class="a" style="left:639.2px;top:454px;width:142.8px;height:1px;background:#9c9c9c;"></div>
<div class="a" style="left:0px;top:454px;width:143px;height:1px;background:#9c9c9c;"></div>
<div class="t b" style="left:660.6px;top:36.20px;font-size:9.6px;color:#5a5a5a;">Save/Recall</div>
<div class="btn" style="left:723.4px;top:34.4px;width:36.4px;height:11.7px;"><svg style="left:3.8px;top:0.2px" width="9" height="9.3" viewBox="0 0 9 10"><rect x="0" y="0" width="9" height="8" rx="1" fill="#2a5fb8"/><rect x="0" y="8.4" width="9" height="1.6" fill="#2a4f98"/><text x="4.5" y="6.6" font-size="7" font-weight="bold" fill="#fff" text-anchor="middle" font-family="Liberation Sans,sans-serif">?</text></svg><div class="lbl" style="left:18px;top:1.55px;font-size:6.6px;">Help</div></div>
<div class="btn" style="left:762px;top:34.4px;width:13.9px;height:11.7px;"><svg style="left:2px;top:0.35px" width="9" height="9" viewBox="0 0 9 9"><path d="M1 1 L8 8 M8 1 L1 8" stroke="#d42020" stroke-width="1.6" stroke-linecap="round"/></svg></div>
<div class="btn sel" style="left:643.8px;top:51.2px;width:68.2px;height:12.4px;border-radius:2px 0 0 2px"><div class="lbl" style="left:0;right:0;text-align:center;top:1.95px;font-size:7px;">Waveform / Setup</div></div>
<div class="btn" style="left:711.6px;top:51.2px;width:65.4px;height:12.4px;border-radius:0 2px 2px 0"><div class="lbl" style="left:0;right:0;text-align:center;top:1.95px;font-size:7px;">Zoom</div></div>
<div class="hd" style="left:644.3px;top:70.05px;font-size:8.3px;">Waveform Memory</div>
<div class="btn sel" style="left:646px;top:82.2px;width:27px;height:12.2px"><div class="a" style="left:2.6px;top:2.2px;width:7.4px;height:6.2px;background:#d6d418;border:1px solid #444"></div><div class="lbl" style="left:13.6px;top:1.8px;font-size:7px">M1</div></div>
<div class="btn" style="left:679.2px;top:82.2px;width:27.8px;height:12.2px"><div class="a" style="left:2.6px;top:2.2px;width:7.4px;height:6.2px;background:#14a4ac;border:1px solid #444"></div><div class="lbl" style="left:13.6px;top:1.8px;font-size:7px">M2</div></div>
<div class="btn" style="left:713px;top:82.2px;width:27.6px;height:12.2px"><div class="a" style="left:2.6px;top:2.2px;width:7.4px;height:6.2px;background:#109c30;border:1px solid #444"></div><div class="lbl" style="left:13.6px;top:1.8px;font-size:7px">M3</div></div>
<div class="btn" style="left:747px;top:82.2px;width:27.8px;height:12.2px"><div class="a" style="left:2.6px;top:2.2px;width:7.4px;height:6.2px;background:#b0085c;border:1px solid #444"></div><div class="lbl" style="left:13.6px;top:1.8px;font-size:7px">M4</div></div>
<div class="btn sel" style="left:646px;top:101px;width:61.8px;height:11.8px;"><svg style="left:4px;top:0.4px" width="11" height="9" viewBox="0 0 11 9"><path d="M.5 6 C3 2.6 8 2.6 10.5 6 C8 8.6 3 8.6 .5 6Z" fill="#fff" stroke="#2f4f70" stroke-width=".8"/><circle cx="5.5" cy="5.8" r="1.9" fill="#22508c"/><path d="M1 3.2 C3.5 .4 7.5 .4 10 3.2" fill="none" stroke="#2f4f70" stroke-width=".9"/></svg><div class="lbl" style="left:19px;top:1.45px;font-size:6.9px;">Visible</div></div>
<div class="btn" style="left:713px;top:101px;width:62px;height:11.8px;"><svg style="left:4px;top:0.4px" width="11" height="9" viewBox="0 0 11 9"><path d="M.5 6 C3 2.6 8 2.6 10.5 6 C8 8.6 3 8.6 .5 6Z" fill="#fff" stroke="#556" stroke-width=".8"/><circle cx="5.5" cy="5.8" r="1.9" fill="#2a66b0"/><path d="M1 3.2 C3.5 .4 7.5 .4 10 3.2" fill="none" stroke="#556" stroke-width=".9"/></svg><div class="lbl" style="left:18.6px;top:1.45px;font-size:6.9px;">Visible All</div></div>
<div class="t b" style="left:647.3px;top:116.70px;font-size:7px;color:#222;">Source</div>
<div class="fld" style="left:646px;top:126.3px;width:52.0px;height:11.8px;border-radius:1.5px 0 0 1.5px"></div>
<div class="t b" style="left:649.5px;top:128.95px;font-size:6.9px;color:#e6e66a;">Ch1</div>
<div class="btn" style="left:698.0px;top:126.3px;width:9.8px;height:11.8px;border-radius:0 2px 2px 0"></div>
<svg style="left:0;top:0" width="782" height="455"><polygon points="700.10,130.16 705.70,130.16 702.90,134.64" fill="#222"/></svg>
<div class="btn" style="left:713px;top:126.3px;width:62px;height:11.8px;"><svg style="left:4px;top:0.15px" width="9.5" height="9.5" viewBox="0 0 10 10"><path d="M.5 .5 H8.4 L9.5 1.6 V9.5 H.5 Z" fill="#4a4a66" stroke="#33334a" stroke-width=".6"/><rect x="2.2" y=".8" width="5.2" height="3" fill="#f2f2f6"/><rect x="1.6" y="5.4" width="6.8" height="3.8" fill="#b8a8f0"/></svg><div class="lbl" style="left:18.6px;top:1.45px;font-size:6.9px;">Save to M1</div></div>
<div class="a" style="left:644.4px;top:146px;width:133.6px;height:1px;background:#8a8a8a;"></div>
<div class="hd" style="left:646px;top:148.9px;font-size:8.2px;font-weight:normal;color:#164a84;">Disk</div>
<div class="t b" style="left:646.8px;top:161.00px;font-size:7px;color:#222;">File Type</div>
<div class="t b" style="left:713.5px;top:161.00px;font-size:7px;color:#222;">File Name Mode</div>
<div class="btn sel" style="left:646.2px;top:171px;width:61.8px;height:11.8px;border-radius:2px 2px 0 0"><svg style="left:2px;top:0.15px" width="13.5" height="9.5" viewBox="0 0 14 10"><rect width="14" height="10" fill="#fff"/><path d="M1 5 C2.5 -.5 5 -.5 7 5 C9 10.5 11.5 10.5 13 5" fill="none" stroke="#1828b0" stroke-width="1.3"/></svg><div class="lbl" style="left:18.6px;top:1.45px;font-size:6.9px;">Waveform</div></div>
<div class="btn" style="left:646.2px;top:182.4px;width:61.8px;height:12px;border-radius:0 0 2px 2px"><svg style="left:3.8px;top:-0.2px" width="9.6" height="10.4" viewBox="0 0 9 10"><path d="M.5 1.8 V8.2 C.5 10.2 8.5 10.2 8.5 8.2 V1.8 Z" fill="#1222a8"/><ellipse cx="4.5" cy="1.8" rx="4" ry="1.5" fill="#3448d8"/><path d="M.5 4 C.5 6 8.5 6 8.5 4 M.5 6.2 C.5 8.2 8.5 8.2 8.5 6.2" fill="none" stroke="#b8c4ff" stroke-width=".7"/></svg><div class="lbl" style="left:18.6px;top:1.55px;font-size:6.9px;">Database</div></div>
<div class="btn sel" style="left:713px;top:171px;width:62px;height:11.8px;border-radius:2px 2px 0 0"><svg style="left:4.6px;top:0.15px" width="9" height="9.5" viewBox="0 0 9 10"><rect x="-2" y="-.3" width="13" height="10.6" fill="#fff"/><path d="M2.4 9.6 L1 6.4 L2 5.8 L2.8 7 V1.6 C2.8 .6 4.1 .6 4.1 1.6 V4.4 L7.4 5 C8 5.2 8 6 7.8 7 L7.2 9.6 Z" fill="#b8b8b8" stroke="#666" stroke-width=".6"/></svg><div class="lbl" style="left:18.6px;top:1.45px;font-size:6.9px;">Manual</div></div>
<div class="btn" style="left:713px;top:182.4px;width:62px;height:12px;border-radius:0 0 2px 2px"><svg style="left:2.8px;top:0.0px" width="10.6" height="10" viewBox="0 0 10.6 10"><circle cx="4" cy="6" r="2.9" fill="none" stroke="#5a5a5a" stroke-width="1.5" stroke-dasharray="1.15 1.13"/><circle cx="4" cy="6" r="2.1" fill="#707070"/><circle cx="4" cy="6" r=".9" fill="#f4f4f4"/><circle cx="8.2" cy="2.4" r="1.7" fill="none" stroke="#666" stroke-width="1" stroke-dasharray=".8 .73"/><circle cx="8.2" cy="2.4" r="1.1" fill="#808080"/><circle cx="8.2" cy="2.4" r=".45" fill="#f4f4f4"/></svg><div class="lbl" style="left:18.6px;top:1.55px;font-size:6.9px;">Auto</div></div>
<div class="t b" style="left:647.3px;top:198.00px;font-size:7px;color:#222;">Source</div>
<div class="fld" style="left:646px;top:207px;width:51.599999999999994px;height:12px;border-radius:1.5px 0 0 1.5px"></div>
<div class="t b" style="left:649.5px;top:209.75px;font-size:6.9px;color:#e6e66a;">Ch1</div>
<div class="btn" style="left:697.6px;top:207px;width:9.8px;height:12px;border-radius:0 2px 2px 0"></div>
<svg style="left:0;top:0" width="782" height="455"><polygon points="699.70,210.96 705.30,210.96 702.50,215.44" fill="#222"/></svg>
<div class="btn" style="left:713px;top:207px;width:62px;height:12px;"><svg style="left:4px;top:0.25px" width="9.5" height="9.5" viewBox="0 0 10 10"><path d="M.5 .5 H8.4 L9.5 1.6 V9.5 H.5 Z" fill="#4a4a66" stroke="#33334a" stroke-width=".6"/><rect x="2.2" y=".8" width="5.2" height="3" fill="#f2f2f6"/><rect x="1.6" y="5.4" width="6.8" height="3.8" fill="#b8a8f0"/></svg><div class="lbl" style="left:18.8px;top:1.55px;font-size:6.9px;">Save...</div></div>
<div class="btn" style="left:664px;top:231.5px;width:99.2px;height:12px;"><svg style="left:4.4px;top:0.0px" width="10" height="10" viewBox="0 0 10 10"><path d="M3 .5 H8.5 L7.5 2.2 V5 H9.6 L5 9.6 L.4 5 H3 Z" fill="#1038d8" stroke="#0a2090" stroke-width=".5"/></svg><div class="lbl" style="left:19.6px;top:1.55px;font-size:6.9px;">Load from Disk to M1</div></div>
<div class="btn dis" style="left:646px;top:255px;width:62px;height:11.8px;"><svg style="left:4px;top:0.4px" width="11" height="9" viewBox="0 0 11 9"><path d="M.5 6 C3 2.6 8 2.6 10.5 6 C8 8.6 3 8.6 .5 6Z" fill="#fff" stroke="#e2e2e2" stroke-width=".8"/><circle cx="5.5" cy="5.8" r="1.9" fill="#e6e6e6"/><path d="M1 3.2 C3.5 .4 7.5 .4 10 3.2" fill="none" stroke="#e2e2e2" stroke-width=".9"/></svg><div class="lbl" style="left:18.6px;top:1.45px;font-size:6.9px;">Visible DB</div></div>
<div class="btn dis" style="left:713px;top:255px;width:62px;height:11.8px;"><svg style="left:4px;top:0.4px" width="11" height="9" viewBox="0 0 11 9"><path d="M.5 6 C3 2.6 8 2.6 10.5 6 C8 8.6 3 8.6 .5 6Z" fill="#fff" stroke="#e2e2e2" stroke-width=".8"/><circle cx="5.5" cy="5.8" r="1.9" fill="#e6e6e6"/><path d="M1 3.2 C3.5 .4 7.5 .4 10 3.2" fill="none" stroke="#e2e2e2" stroke-width=".9"/></svg><div class="lbl" style="left:18.6px;top:1.45px;font-size:6.9px;">Clear DB</div></div>
<div class="a" style="left:644.4px;top:272.8px;width:133.6px;height:1px;background:#8a8a8a;"></div>
<div class="hd" style="left:646px;top:275.25px;font-size:8.3px;">Setup</div>
<div class="btn" style="left:646px;top:290.3px;width:78.8px;height:12px;"><svg style="left:4.6px;top:0.0px" width="10" height="10" viewBox="0 0 10 10"><path d="M3 .5 H8.5 L7.5 2.2 V5 H9.6 L5 9.6 L.4 5 H3 Z" fill="#1038d8" stroke="#0a2090" stroke-width=".5"/></svg><div class="lbl" style="left:18.6px;top:1.55px;font-size:6.9px;">Recall Setup..</div></div>
<div class="btn" style="left:646px;top:308.4px;width:78.8px;height:12px;"><svg style="left:4.6px;top:0.0px" width="10" height="10" viewBox="0 0 10 10"><path d="M3 .5 H8.5 L7.5 2.2 V5 H9.6 L5 9.6 L.4 5 H3 Z" fill="#1038d8" stroke="#0a2090" stroke-width=".5"/></svg><div class="lbl" style="left:18.6px;top:1.55px;font-size:6.9px;">Recall Default</div></div>
<div class="btn" style="left:646px;top:326.9px;width:78.8px;height:12px;"><svg style="left:4.6px;top:0.0px" width="10" height="10" viewBox="0 0 10 10"><path d="M3 .5 H8.5 L7.5 2.2 V5 H9.6 L5 9.6 L.4 5 H3 Z" fill="#1038d8" stroke="#0a2090" stroke-width=".5"/></svg><div class="lbl" style="left:18.6px;top:1.55px;font-size:6.9px;">Recall Factory</div></div>
<div class="btn" style="left:646px;top:345.3px;width:78.8px;height:12px;"><svg style="left:4.6px;top:0.0px" width="10" height="10" viewBox="0 0 10 10"><path d="M3 .5 H8.5 L7.5 2.2 V5 H9.6 L5 9.6 L.4 5 H3 Z" fill="#1038d8" stroke="#0a2090" stroke-width=".5"/></svg><div class="lbl" style="left:18.6px;top:1.55px;font-size:6.9px;">Recall Power Off</div></div>
<div class="btn" style="left:693.8px;top:364.3px;width:79.2px;height:12px;"><svg style="left:4px;top:0.25px" width="9.5" height="9.5" viewBox="0 0 10 10"><path d="M.5 .5 H8.4 L9.5 1.6 V9.5 H.5 Z" fill="#4a4a66" stroke="#33334a" stroke-width=".6"/><rect x="2.2" y=".8" width="5.2" height="3" fill="#f2f2f6"/><rect x="1.6" y="5.4" width="6.8" height="3.8" fill="#b8a8f0"/></svg><div class="lbl" style="left:19.6px;top:1.55px;font-size:6.9px;">Save  Setup..</div></div>
<div class="btn" style="left:693.8px;top:382.6px;width:79.2px;height:12px;"><svg style="left:4px;top:0.25px" width="9.5" height="9.5" viewBox="0 0 10 10"><path d="M.5 .5 H8.4 L9.5 1.6 V9.5 H.5 Z" fill="#4a4a66" stroke="#33334a" stroke-width=".6"/><rect x="2.2" y=".8" width="5.2" height="3" fill="#f2f2f6"/><rect x="1.6" y="5.4" width="6.8" height="3.8" fill="#b8a8f0"/></svg><div class="lbl" style="left:19.6px;top:1.55px;font-size:6.9px;">Save as Default</div></div>
<div class="a" style="left:643px;top:401.3px;width:134.4px;height:1px;background:#8a8a8a;"></div>
<div class="hd" style="left:644.3px;top:404.15000000000003px;font-size:8.3px;">Actions for Memory</div>
<div class="btn" style="left:646px;top:418.1px;width:62px;height:11.8px;"><svg style="left:2.6px;top:0.9px" width="11.5" height="8" viewBox="0 0 12 8"><path d="M1.4 0 V8 M5.2 0 V8" stroke="#1418a8" stroke-width="1.5"/><path d="M1.4 4.8 H5.2" stroke="#1418a8" stroke-width="1.3"/><path d="M5.2 2 H11.8" stroke="#1418a8" stroke-width="1.4"/></svg><div class="lbl" style="left:18.6px;top:1.45px;font-size:6.9px;">Measure..</div></div>
<div class="btn" style="left:713px;top:418.1px;width:62px;height:11.8px;"><svg style="left:3.5999999999999996px;top:0.4px" width="11" height="9" viewBox="0 0 11 9"><text x="0" y="7.6" font-size="9.5" font-style="italic" font-weight="bold" fill="#111" font-family="Liberation Serif,serif">f</text><text x="4.2" y="7.6" font-size="5.5" fill="#111" font-family="Liberation Sans,sans-serif">(x)</text></svg><div class="lbl" style="left:18.6px;top:1.45px;font-size:6.9px;">Math..</div></div>
<div class="btn" style="left:646px;top:436.2px;width:62px;height:12.2px;"><svg style="left:2.6px;top:0.6px" width="12" height="9" viewBox="0 0 12 9"><path d="M3 1.5 L7.5 .8 L11.6 5.4 L8 8.6 L3.6 4.4 Z" fill="#f0a020" stroke="#c07808" stroke-width=".5"/><ellipse cx="2.6" cy="2.6" rx="2.2" ry="1.3" fill="none" stroke="#223" stroke-width=".8" transform="rotate(-25 2.6 2.6)"/></svg><div class="lbl" style="left:18.6px;top:1.65px;font-size:6.9px;">Label</div></div>
</div></div></body></html>
